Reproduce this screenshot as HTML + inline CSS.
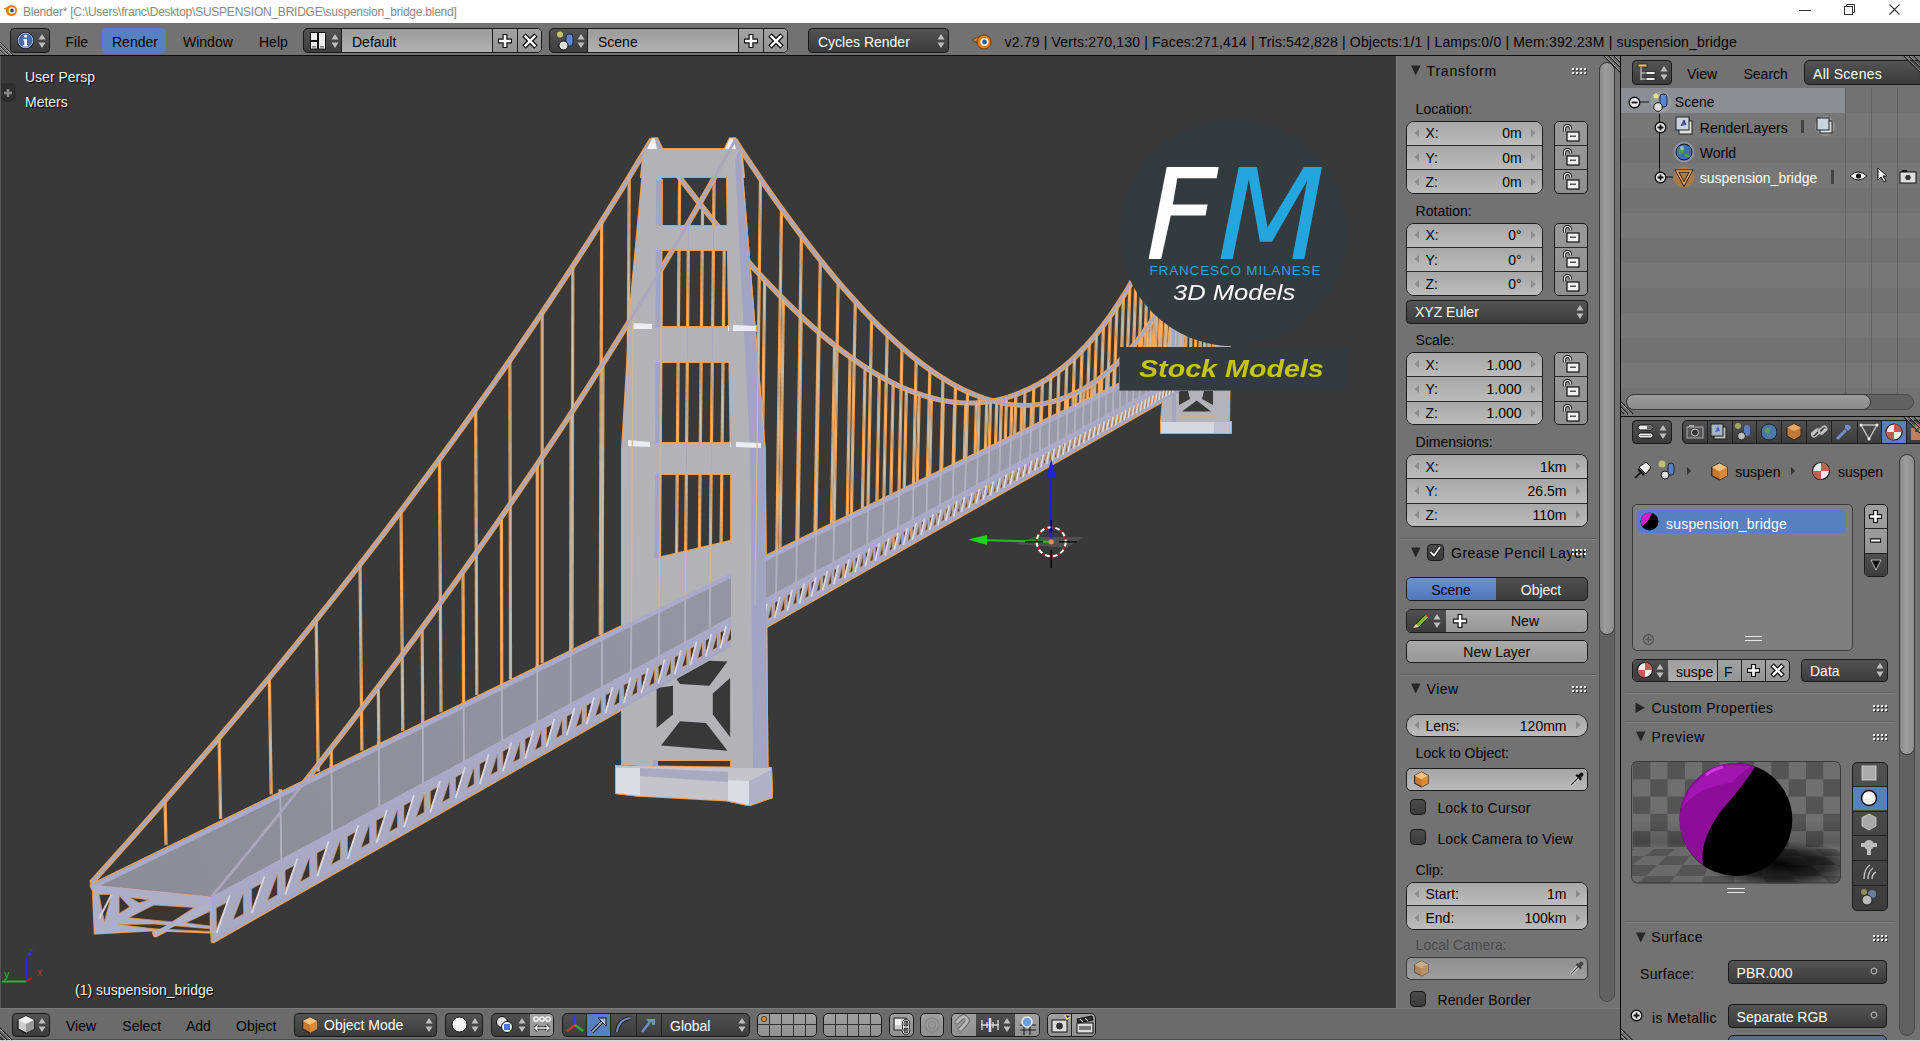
<!DOCTYPE html><html><head><meta charset="utf-8"><title>Blender</title><style>
*{margin:0;padding:0;box-sizing:border-box}
html,body{width:1920px;height:1041px;overflow:hidden;background:#727272}
body{position:relative;font-family:"Liberation Sans",sans-serif}
.t{position:absolute;white-space:nowrap}
.b{position:absolute}
svg{position:absolute;overflow:visible}
.menu{background:linear-gradient(#535353,#3b3b3b);border:1px solid #1a1a1a;border-radius:4px}
.num{background:linear-gradient(#a5a5a5,#bababa);border:1px solid #1e1e1e;border-radius:8px}
.btn{background:linear-gradient(#a4a4a4,#929292);border:1px solid #1e1e1e;border-radius:4px}
.tfld{background:linear-gradient(#9d9d9d,#afafaf)}
.chk{background:linear-gradient(#505050,#3e3e3e);border:1px solid #1a1a1a;border-radius:4px}
.sel{background:#5680c2}
</style></head><body>
<div class="b " style="left:0.0px;top:56.0px;width:1396.0px;height:952.0px;background:#393939;"></div>
<svg width="1396" height="952" viewBox="0 56 1396 952" style="left:0;top:56px"><defs><clipPath id="twc"><polygon points="645,149 661,149 660,300 656,470 655,766 622,764 622,450 631,300"/><polygon points="727,149 740,149 764.7,450 767.5,768 731,768 731,474 727,177"/><polygon points="644,149 741,149 744,177 641,177"/><polygon points="650,226 745,226 748,250 647,250"/><polygon points="633,327 754,327 756,362 631,362"/><polygon points="629,443 760,443 762,474 627,474"/></clipPath><linearGradient id="dkg" gradientUnits="userSpaceOnUse" x1="150" y1="890" x2="1150" y2="390"><stop offset="0" stop-color="#8d8d99"/><stop offset="0.5" stop-color="#9393a2"/><stop offset="1" stop-color="#9c9cac"/></linearGradient><filter id="ol" x="-2%" y="-2%" width="104%" height="104%"><feMorphology in="SourceAlpha" operator="dilate" radius="1" result="d"/><feFlood flood-color="#e9a257"/><feComposite in2="d" operator="in" result="o"/><feMerge><feMergeNode in="o"/><feMergeNode in="SourceGraphic"/></feMerge></filter></defs><g filter="url(#ol)"><polyline points="91.5,882.7 113.5,858.3 135.0,834.3 155.8,810.7 176.1,787.5 195.8,764.7 215.0,742.3 233.7,720.2 251.9,698.5 269.7,677.1 287.0,656.0 303.9,635.2 320.3,614.7 336.4,594.5 352.1,574.5 367.4,554.8 382.4,535.4 397.0,516.2 411.3,497.2 425.3,478.4 438.9,459.9 452.3,441.5 465.4,423.4 478.2,405.4 490.7,387.7 503.0,370.1 515.0,352.7 526.8,335.4 538.4,318.3 549.7,301.4 560.8,284.6 571.7,268.0 582.3,251.5 592.8,235.2 603.1,218.9 613.2,202.8 623.1,186.9 632.8,171.0 642.3,155.3 651.7,139.7" fill="none" stroke="#aca6bc" stroke-width="2.8" /><polyline points="651.7,139.7 662.1,154.1 672.3,167.8 682.3,181.1 692.0,193.7 701.5,205.9 710.7,217.5 719.8,228.6 728.7,239.3 737.4,249.5 745.9,259.2 754.2,268.5 762.4,277.4 770.4,285.9 778.2,294.0 785.9,301.7 793.4,309.0 800.8,316.0 808.0,322.7 815.1,329.0 822.1,335.0 828.9,340.7 835.6,346.0 842.2,351.1 848.7,355.9 855.0,360.4 861.3,364.7 867.4,368.7 873.4,372.4 879.4,375.9 885.2,379.1 890.9,382.1 896.6,384.9 902.1,387.4 907.6,389.8 913.0,391.9 918.3,393.8 923.5,395.6 928.6,397.1 933.7,398.4 938.6,399.6 943.5,400.6 948.4,401.4 953.1,402.0 957.8,402.5 962.4,402.8 967.0,403.0 971.5,403.0 975.9,402.8 980.3,402.5 984.6,402.1 988.9,401.5 993.1,400.8 997.2,400.0 1001.3,399.0 1005.3,398.0 1009.3,396.8 1013.2,395.5 1017.1,394.1 1021.0,392.5 1024.7,390.9 1028.5,389.3 1032.2,387.5 1035.8,385.6 1039.4,383.6 1043.0,381.5 1046.5,379.4 1050.0,377.1 1053.4,374.7 1056.8,372.3 1060.2,369.7 1063.5,367.1 1066.8,364.3 1070.1,361.5 1073.3,358.6 1076.5,355.6 1079.6,352.5 1082.7,349.3 1085.8,346.1 1088.9,342.7 1091.9,339.3 1094.9,335.8 1097.8,332.2 1100.8,328.5 1103.7,324.7 1106.5,320.9 1109.4,317.0 1112.2,313.0 1115.0,308.9 1117.8,304.8 1120.5,300.6 1123.2,296.3 1125.9,291.9 1128.6,287.5 1131.2,283.0 1133.8,278.4 1136.4,273.8 1139.0,269.1 1141.6,264.3 1144.1,259.5 1146.6,254.6 1149.1,249.6 1151.5,244.5 1154.0,239.4 1156.4,234.3 1158.8,229.0 1161.2,223.7 1163.6,218.4 1165.9,213.0 1168.2,207.5 1170.6,202.0 1172.9,196.4 1175.1,190.7 1177.4,185.0 1179.6,179.3 1181.9,173.4 1184.1,167.6 1186.3,161.6 1188.4,155.6 1190.6,149.6" fill="none" stroke="#aca6bc" stroke-width="2.8" /><line x1="165.0" y1="800.3" x2="166.0" y2="844.3" stroke="#d6b894" stroke-width="1.2" /><line x1="219.1" y1="737.6" x2="220.6" y2="817.9" stroke="#d6b894" stroke-width="1.2" /><line x1="269.3" y1="677.5" x2="271.2" y2="793.5" stroke="#d6b894" stroke-width="1.2" /><line x1="316.2" y1="619.9" x2="318.2" y2="770.8" stroke="#d6b894" stroke-width="1.2" /><line x1="360.0" y1="564.5" x2="361.9" y2="749.7" stroke="#d6b894" stroke-width="1.2" /><line x1="401.0" y1="510.9" x2="402.8" y2="729.9" stroke="#d6b894" stroke-width="1.2" /><line x1="439.5" y1="459.1" x2="441.0" y2="711.5" stroke="#d6b894" stroke-width="1.2" /><line x1="475.7" y1="408.9" x2="476.8" y2="694.2" stroke="#d6b894" stroke-width="1.2" /><line x1="509.9" y1="360.1" x2="510.5" y2="677.9" stroke="#d6b894" stroke-width="1.2" /><line x1="542.2" y1="312.6" x2="542.2" y2="662.6" stroke="#d6b894" stroke-width="1.2" /><line x1="572.8" y1="266.3" x2="572.0" y2="648.2" stroke="#d6b894" stroke-width="1.2" /><line x1="601.7" y1="221.1" x2="600.2" y2="634.6" stroke="#d6b894" stroke-width="1.2" /><line x1="629.2" y1="176.8" x2="626.9" y2="621.7" stroke="#d6b894" stroke-width="1.2" /><line x1="679.6" y1="177.6" x2="676.2" y2="597.9" stroke="#d6b894" stroke-width="1.2" /><line x1="702.6" y1="207.3" x2="699.0" y2="586.9" stroke="#d6b894" stroke-width="1.2" /><line x1="724.4" y1="234.1" x2="720.7" y2="576.4" stroke="#d6b894" stroke-width="1.2" /><line x1="745.0" y1="258.2" x2="741.4" y2="566.5" stroke="#d6b894" stroke-width="1.2" /><line x1="764.7" y1="279.9" x2="761.1" y2="556.9" stroke="#d6b894" stroke-width="1.2" /><line x1="783.4" y1="299.2" x2="779.9" y2="547.9" stroke="#d6b894" stroke-width="1.2" /><line x1="801.2" y1="316.5" x2="797.9" y2="539.2" stroke="#d6b894" stroke-width="1.2" /><line x1="818.3" y1="331.8" x2="815.0" y2="530.9" stroke="#d6b894" stroke-width="1.2" /><line x1="834.6" y1="345.2" x2="831.5" y2="522.9" stroke="#d6b894" stroke-width="1.2" /><line x1="850.1" y1="357.0" x2="847.3" y2="515.3" stroke="#d6b894" stroke-width="1.2" /><line x1="865.1" y1="367.2" x2="862.4" y2="508.0" stroke="#d6b894" stroke-width="1.2" /><line x1="879.4" y1="375.9" x2="876.9" y2="501.0" stroke="#d6b894" stroke-width="1.2" /><line x1="893.2" y1="383.2" x2="890.9" y2="494.3" stroke="#d6b894" stroke-width="1.2" /><line x1="906.4" y1="389.3" x2="904.3" y2="487.8" stroke="#d6b894" stroke-width="1.2" /><line x1="919.2" y1="394.1" x2="917.2" y2="481.6" stroke="#d6b894" stroke-width="1.2" /><line x1="931.4" y1="397.9" x2="929.7" y2="475.6" stroke="#d6b894" stroke-width="1.2" /><line x1="943.3" y1="400.5" x2="941.7" y2="469.8" stroke="#d6b894" stroke-width="1.2" /><line x1="954.7" y1="402.2" x2="953.2" y2="464.2" stroke="#d6b894" stroke-width="1.2" /><line x1="965.8" y1="402.9" x2="964.4" y2="458.8" stroke="#d6b894" stroke-width="1.2" /><line x1="976.4" y1="402.8" x2="975.1" y2="453.6" stroke="#d6b894" stroke-width="1.2" /><line x1="986.8" y1="401.8" x2="985.5" y2="448.6" stroke="#d6b894" stroke-width="1.2" /><line x1="996.8" y1="400.1" x2="995.6" y2="443.7" stroke="#d6b894" stroke-width="1.2" /><line x1="1006.5" y1="397.6" x2="1005.3" y2="439.0" stroke="#d6b894" stroke-width="1.2" /><line x1="1015.9" y1="394.5" x2="1014.7" y2="434.5" stroke="#d6b894" stroke-width="1.2" /><line x1="1025.0" y1="390.8" x2="1023.9" y2="430.1" stroke="#d6b894" stroke-width="1.2" /><line x1="1033.8" y1="386.6" x2="1032.7" y2="425.8" stroke="#d6b894" stroke-width="1.2" /><line x1="1042.4" y1="381.9" x2="1041.3" y2="421.7" stroke="#d6b894" stroke-width="1.2" /><line x1="1050.8" y1="376.6" x2="1049.6" y2="417.7" stroke="#d6b894" stroke-width="1.2" /><line x1="1058.9" y1="370.7" x2="1057.6" y2="413.8" stroke="#d6b894" stroke-width="1.2" /><line x1="1066.8" y1="364.3" x2="1065.4" y2="410.0" stroke="#d6b894" stroke-width="1.2" /><line x1="1074.5" y1="357.4" x2="1073.0" y2="406.4" stroke="#d6b894" stroke-width="1.2" /><line x1="1082.1" y1="350.0" x2="1080.4" y2="402.8" stroke="#d6b894" stroke-width="1.2" /><line x1="1089.4" y1="342.1" x2="1087.6" y2="399.3" stroke="#d6b894" stroke-width="1.2" /><line x1="1096.5" y1="333.8" x2="1094.5" y2="396.0" stroke="#d6b894" stroke-width="1.2" /><line x1="1103.5" y1="324.9" x2="1101.3" y2="392.7" stroke="#d6b894" stroke-width="1.2" /><line x1="1110.3" y1="315.7" x2="1107.9" y2="389.5" stroke="#d6b894" stroke-width="1.2" /><line x1="1117.0" y1="306.0" x2="1114.3" y2="386.4" stroke="#d6b894" stroke-width="1.2" /><line x1="1123.5" y1="295.8" x2="1120.6" y2="383.4" stroke="#d6b894" stroke-width="1.2" /><line x1="1129.9" y1="285.3" x2="1126.6" y2="380.5" stroke="#d6b894" stroke-width="1.2" /><line x1="1136.1" y1="274.3" x2="1132.6" y2="377.6" stroke="#d6b894" stroke-width="1.2" /><line x1="1142.3" y1="263.0" x2="1138.4" y2="374.8" stroke="#d6b894" stroke-width="1.2" /><line x1="1148.2" y1="251.2" x2="1144.0" y2="372.1" stroke="#d6b894" stroke-width="1.2" /><line x1="1154.1" y1="239.2" x2="1149.5" y2="369.4" stroke="#d6b894" stroke-width="1.2" /><line x1="1159.9" y1="226.7" x2="1154.9" y2="366.8" stroke="#d6b894" stroke-width="1.2" /><line x1="1165.5" y1="213.9" x2="1160.1" y2="364.3" stroke="#d6b894" stroke-width="1.2" /><line x1="1171.1" y1="200.7" x2="1165.2" y2="361.8" stroke="#d6b894" stroke-width="1.2" /><line x1="1176.5" y1="187.3" x2="1170.2" y2="359.4" stroke="#d6b894" stroke-width="1.2" /><line x1="1181.8" y1="173.5" x2="1175.1" y2="357.1" stroke="#d6b894" stroke-width="1.2" /><line x1="1187.1" y1="159.3" x2="1179.8" y2="354.8" stroke="#d6b894" stroke-width="1.2" /><polygon points="1186.0,150.0 1197.0,150.0 1178.0,422.0 1161.0,422.0" fill="#b3b3b9" /><polygon points="1224.0,150.0 1233.0,150.0 1229.0,422.0 1213.0,422.0" fill="#b3b3b9" /><polygon points="1172.0,300.0 1178.0,300.0 1178.0,422.0 1172.0,422.0" fill="#a6a6c4" /><polygon points="1176.0,388.0 1216.0,388.0 1216.0,422.0 1176.0,422.0" fill="#b3b3b9" /><polygon points="1179.0,391.0 1188.0,391.0 1190.0,399.0 1179.0,405.0" fill="#393939" /><polygon points="1204.0,391.0 1213.0,391.0 1213.0,405.0 1202.0,399.0" fill="#393939" /><polygon points="1182.0,411.5 1211.0,411.5 1196.7,400.5" fill="#393939" /><polygon points="1180.0,415.0 1213.0,415.0 1213.0,418.0 1180.0,418.0" fill="#c8b090" /><polygon points="1161.0,422.0 1231.0,422.0 1231.0,433.0 1161.0,433.0" fill="#d6d6de" /><polygon points="1214.0,422.0 1231.0,422.0 1231.0,433.0 1214.0,433.0" fill="#c0c0d4" /><polygon points="645.0,149.0 661.0,149.0 660.0,300.0 656.0,470.0 655.0,766.0 622.0,764.0 622.0,450.0 631.0,300.0" fill="#b3b3b7" /><polygon points="656.0,180.0 662.0,180.0 660.0,470.0 657.0,766.0 653.0,766.0 655.0,470.0" fill="#a3a3c3" /><polygon points="644.0,149.0 741.0,149.0 744.0,177.0 641.0,177.0" fill="#b3b3b7" /><polygon points="650.0,226.0 745.0,226.0 748.0,250.0 647.0,250.0" fill="#b3b3b7" /><polygon points="633.0,327.0 754.0,327.0 756.0,362.0 631.0,362.0" fill="#b3b3b7" /><polygon points="629.0,443.0 760.0,443.0 762.0,474.0 627.0,474.0" fill="#b3b3b7" /><polygon points="647.0,149.0 652.0,138.5 657.0,138.5 660.0,149.0" fill="#f2f2f6" /><polygon points="655.0,138.5 657.0,138.5 662.0,149.0 657.0,149.0" fill="#a6a6c4" /><polygon points="725.0,149.0 730.0,138.5 735.0,138.5 738.0,149.0" fill="#f2f2f6" /><polygon points="733.0,138.5 735.0,138.5 741.0,149.0 736.0,149.0" fill="#a6a6c4" /><polygon points="633.0,323.0 652.0,324.0 652.0,329.0 633.0,329.0" fill="#ececf4" /><polygon points="728.0,326.0 750.0,326.0 750.0,331.0 728.0,331.0" fill="#ececf4" /><polygon points="628.0,440.0 650.0,442.0 650.0,447.0 628.0,446.0" fill="#ececf4" /><polygon points="730.0,442.0 756.0,443.0 756.0,448.0 730.0,447.0" fill="#ececf4" /><polygon points="650.0,560.0 735.0,540.0 735.0,760.0 650.0,760.0" fill="#b3b3b7" /><polygon points="676.5,679.0 709.4,660.8 727.5,661.6 709.4,685.8 680.0,684.0" fill="#393939" /><polygon points="656.6,688.0 673.0,685.8 673.0,714.4 656.6,728.0" fill="#393939" /><polygon points="712.8,693.6 730.1,678.0 730.1,736.9 712.8,714.4" fill="#393939" /><polygon points="661.0,745.5 680.0,721.3 706.0,723.0 727.5,750.7" fill="#393939" /><polygon points="616.0,766.0 771.0,768.0 772.0,797.0 749.0,805.0 728.0,800.5 640.0,795.7 616.0,793.0" fill="#c4c4ca" /><polygon points="616.0,768.0 640.0,768.0 640.0,795.7 616.0,793.0" fill="#dcdce4" /><polygon points="728.0,780.0 749.0,781.0 749.0,805.0 728.0,800.5" fill="#dcdce4" /><polygon points="640.0,768.0 728.0,772.0 728.0,782.0 640.0,776.0" fill="#a9a9c0" /><polygon points="91.5,884.7 1189.1,351.5 1225.8,352.2 211.6,896.7" fill="url(#dkg)" /><polyline points="91.6,887.4 1189.0,352.3" fill="none" stroke="#a9a9c9" stroke-width="4.5" /><polygon points="211.6,896.7 1225.8,352.2 1225.3,364.7 212.5,942.4" fill="#a9a9c4" /><polygon points="216.2,908.1 227.0,902.2 216.6,929.0" fill="#3c3631" stroke="#d89858" stroke-width="0.6"/><polygon points="233.1,919.7 243.6,913.8 243.2,893.3" fill="#3c3631" stroke="#d89858" stroke-width="0.6"/><line x1="216.7" y1="933.1" x2="229.8" y2="895.2" stroke="#dcdce6" stroke-width="1.6" /><polygon points="251.5,888.8 261.8,883.2 251.9,909.2" fill="#3c3631" stroke="#d89858" stroke-width="0.6"/><polygon points="267.5,900.4 277.5,894.8 277.2,874.7" fill="#3c3631" stroke="#d89858" stroke-width="0.6"/><line x1="251.9" y1="913.1" x2="264.4" y2="876.4" stroke="#dcdce6" stroke-width="1.6" /><polygon points="285.1,870.4 294.8,865.1 285.4,890.3" fill="#3c3631" stroke="#d89858" stroke-width="0.6"/><polygon points="300.2,882.0 309.7,876.6 309.4,857.1" fill="#3c3631" stroke="#d89858" stroke-width="0.6"/><line x1="285.4" y1="894.2" x2="297.3" y2="858.5" stroke="#dcdce6" stroke-width="1.6" /><polygon points="316.9,853.0 326.2,847.9 317.2,872.4" fill="#3c3631" stroke="#d89858" stroke-width="0.6"/><polygon points="331.3,864.5 340.4,859.4 340.2,840.3" fill="#3c3631" stroke="#d89858" stroke-width="0.6"/><line x1="317.3" y1="876.2" x2="328.6" y2="841.5" stroke="#dcdce6" stroke-width="1.6" /><polygon points="347.3,836.4 356.1,831.5 347.5,855.4" fill="#3c3631" stroke="#d89858" stroke-width="0.6"/><polygon points="361.0,847.8 369.6,842.9 369.4,824.3" fill="#3c3631" stroke="#d89858" stroke-width="0.6"/><line x1="347.6" y1="859.1" x2="358.4" y2="825.3" stroke="#dcdce6" stroke-width="1.6" /><polygon points="376.3,820.5 384.7,815.9 376.4,839.1" fill="#3c3631" stroke="#d89858" stroke-width="0.6"/><polygon points="389.3,831.9 397.5,827.3 397.4,809.0" fill="#3c3631" stroke="#d89858" stroke-width="0.6"/><line x1="376.5" y1="842.7" x2="386.9" y2="809.9" stroke="#dcdce6" stroke-width="1.6" /><polygon points="403.9,805.4 411.9,801.0 404.0,823.6" fill="#3c3631" stroke="#d89858" stroke-width="0.6"/><polygon points="416.3,816.7 424.2,812.3 424.1,794.4" fill="#3c3631" stroke="#d89858" stroke-width="0.6"/><line x1="404.1" y1="827.1" x2="414.0" y2="795.1" stroke="#dcdce6" stroke-width="1.6" /><polygon points="430.3,791.0 438.0,786.8 430.4,808.8" fill="#3c3631" stroke="#d89858" stroke-width="0.6"/><polygon points="442.2,802.2 449.7,797.9 449.6,780.4" fill="#3c3631" stroke="#d89858" stroke-width="0.6"/><line x1="430.4" y1="812.2" x2="440.0" y2="781.0" stroke="#dcdce6" stroke-width="1.6" /><polygon points="455.6,777.2 462.9,773.1 455.6,794.6" fill="#3c3631" stroke="#d89858" stroke-width="0.6"/><polygon points="466.9,788.3 474.1,784.2 474.0,767.1" fill="#3c3631" stroke="#d89858" stroke-width="0.6"/><line x1="455.7" y1="798.0" x2="464.8" y2="767.6" stroke="#dcdce6" stroke-width="1.6" /><polygon points="479.7,763.9 486.8,760.1 479.8,781.0" fill="#3c3631" stroke="#d89858" stroke-width="0.6"/><polygon points="490.6,774.9 497.5,771.1 497.4,754.3" fill="#3c3631" stroke="#d89858" stroke-width="0.6"/><line x1="479.8" y1="784.3" x2="488.6" y2="754.6" stroke="#dcdce6" stroke-width="1.6" /><polygon points="502.9,751.3 509.7,747.6 502.9,768.0" fill="#3c3631" stroke="#d89858" stroke-width="0.6"/><polygon points="513.3,762.2 519.9,758.5 519.9,742.0" fill="#3c3631" stroke="#d89858" stroke-width="0.6"/><line x1="502.9" y1="771.2" x2="511.4" y2="742.3" stroke="#dcdce6" stroke-width="1.6" /><polygon points="525.1,739.1 531.6,735.6 525.1,755.5" fill="#3c3631" stroke="#d89858" stroke-width="0.6"/><polygon points="535.0,749.9 541.4,746.4 541.4,730.2" fill="#3c3631" stroke="#d89858" stroke-width="0.6"/><line x1="525.1" y1="758.7" x2="533.3" y2="730.4" stroke="#dcdce6" stroke-width="1.6" /><polygon points="546.5,727.5 552.7,724.0 546.4,743.5" fill="#3c3631" stroke="#d89858" stroke-width="0.6"/><polygon points="556.0,738.2 562.1,734.7 562.1,718.9" fill="#3c3631" stroke="#d89858" stroke-width="0.6"/><line x1="546.4" y1="746.7" x2="554.3" y2="719.0" stroke="#dcdce6" stroke-width="1.6" /><polygon points="566.9,716.2 572.9,713.0 566.9,732.0" fill="#3c3631" stroke="#d89858" stroke-width="0.6"/><polygon points="576.1,726.9 581.9,723.6 582.0,708.0" fill="#3c3631" stroke="#d89858" stroke-width="0.6"/><line x1="566.9" y1="735.1" x2="574.5" y2="708.0" stroke="#dcdce6" stroke-width="1.6" /><polygon points="586.6,705.5 592.4,702.3 586.6,720.9" fill="#3c3631" stroke="#d89858" stroke-width="0.6"/><polygon points="595.4,716.0 601.1,712.8 601.1,697.6" fill="#3c3631" stroke="#d89858" stroke-width="0.6"/><line x1="586.6" y1="724.0" x2="593.9" y2="697.5" stroke="#dcdce6" stroke-width="1.6" /><polygon points="605.6,695.1 611.2,692.1 605.5,710.3" fill="#3c3631" stroke="#d89858" stroke-width="0.6"/><polygon points="614.0,705.5 619.5,702.5 619.5,687.5" fill="#3c3631" stroke="#d89858" stroke-width="0.6"/><line x1="605.5" y1="713.3" x2="612.6" y2="687.3" stroke="#dcdce6" stroke-width="1.6" /><polygon points="623.9,685.1 629.2,682.2 623.8,700.0" fill="#3c3631" stroke="#d89858" stroke-width="0.6"/><polygon points="631.9,695.4 637.2,692.5 637.3,677.8" fill="#3c3631" stroke="#d89858" stroke-width="0.6"/><line x1="623.8" y1="702.9" x2="630.6" y2="677.6" stroke="#dcdce6" stroke-width="1.6" /><polygon points="641.4,675.5 646.6,672.7 641.4,690.2" fill="#3c3631" stroke="#d89858" stroke-width="0.6"/><polygon points="649.2,685.7 654.3,682.9 654.4,668.4" fill="#3c3631" stroke="#d89858" stroke-width="0.6"/><line x1="641.3" y1="693.0" x2="648.0" y2="668.1" stroke="#dcdce6" stroke-width="1.6" /><polygon points="658.4,666.2 663.4,663.5 658.3,680.6" fill="#3c3631" stroke="#d89858" stroke-width="0.6"/><polygon points="665.9,676.4 670.8,673.6 670.9,659.4" fill="#3c3631" stroke="#d89858" stroke-width="0.6"/><line x1="658.3" y1="683.4" x2="664.7" y2="659.1" stroke="#dcdce6" stroke-width="1.6" /><polygon points="674.8,657.3 679.6,654.7 674.7,671.4" fill="#3c3631" stroke="#d89858" stroke-width="0.6"/><polygon points="682.0,667.3 686.7,664.7 686.8,650.7" fill="#3c3631" stroke="#d89858" stroke-width="0.6"/><line x1="674.6" y1="674.2" x2="680.9" y2="650.3" stroke="#dcdce6" stroke-width="1.6" /><polygon points="690.6,648.6 695.2,646.1 690.4,662.5" fill="#3c3631" stroke="#d89858" stroke-width="0.6"/><polygon points="697.5,658.6 702.1,656.0 702.2,642.3" fill="#3c3631" stroke="#d89858" stroke-width="0.6"/><line x1="690.4" y1="665.3" x2="696.5" y2="641.8" stroke="#dcdce6" stroke-width="1.6" /><polygon points="705.8,640.3 710.3,637.8 705.7,654.0" fill="#3c3631" stroke="#d89858" stroke-width="0.6"/><polygon points="712.5,650.1 716.9,647.6 717.1,634.1" fill="#3c3631" stroke="#d89858" stroke-width="0.6"/><line x1="705.7" y1="656.6" x2="711.5" y2="633.6" stroke="#dcdce6" stroke-width="1.6" /><polygon points="720.6,632.2 724.9,629.9 720.4,645.7" fill="#3c3631" stroke="#d89858" stroke-width="0.6"/><polygon points="727.1,642.0 731.3,639.6 731.5,626.3" fill="#3c3631" stroke="#d89858" stroke-width="0.6"/><line x1="720.4" y1="648.3" x2="726.1" y2="625.7" stroke="#dcdce6" stroke-width="1.6" /><polygon points="734.9,624.4 739.0,622.1 734.7,637.7" fill="#3c3631" stroke="#d89858" stroke-width="0.6"/><polygon points="741.1,634.1 745.2,631.7 745.4,618.7" fill="#3c3631" stroke="#d89858" stroke-width="0.6"/><line x1="734.7" y1="640.3" x2="740.2" y2="618.1" stroke="#dcdce6" stroke-width="1.6" /><polygon points="748.7,616.9 752.7,614.6 748.5,629.9" fill="#3c3631" stroke="#d89858" stroke-width="0.6"/><polygon points="754.7,626.4 758.7,624.2 758.9,611.3" fill="#3c3631" stroke="#d89858" stroke-width="0.6"/><line x1="748.5" y1="632.5" x2="753.8" y2="610.7" stroke="#dcdce6" stroke-width="1.6" /><polygon points="762.0,609.6 766.0,607.4 761.9,622.4" fill="#3c3631" stroke="#d89858" stroke-width="0.6"/><polygon points="767.9,619.0 771.7,616.8 771.9,604.2" fill="#3c3631" stroke="#d89858" stroke-width="0.6"/><line x1="761.8" y1="624.9" x2="767.0" y2="603.5" stroke="#dcdce6" stroke-width="1.6" /><polygon points="775.0,602.5 778.8,600.4 774.8,615.1" fill="#3c3631" stroke="#d89858" stroke-width="0.6"/><polygon points="780.6,611.8 784.4,609.7 784.6,597.2" fill="#3c3631" stroke="#d89858" stroke-width="0.6"/><line x1="774.8" y1="617.6" x2="779.8" y2="596.6" stroke="#dcdce6" stroke-width="1.6" /><polygon points="787.5,595.6 791.2,593.6 787.3,608.1" fill="#3c3631" stroke="#d89858" stroke-width="0.6"/><polygon points="793.0,604.9 796.6,602.8 796.8,590.5" fill="#3c3631" stroke="#d89858" stroke-width="0.6"/><line x1="787.3" y1="610.5" x2="792.2" y2="589.8" stroke="#dcdce6" stroke-width="1.6" /><polygon points="799.7,589.0 803.3,587.0 799.5,601.2" fill="#3c3631" stroke="#d89858" stroke-width="0.6"/><polygon points="805.0,598.1 808.5,596.2 808.7,584.0" fill="#3c3631" stroke="#d89858" stroke-width="0.6"/><line x1="799.5" y1="603.6" x2="804.3" y2="583.3" stroke="#dcdce6" stroke-width="1.6" /><polygon points="811.5,582.5 815.0,580.6 811.3,594.6" fill="#3c3631" stroke="#d89858" stroke-width="0.6"/><polygon points="816.6,591.6 820.0,589.7 820.2,577.7" fill="#3c3631" stroke="#d89858" stroke-width="0.6"/><line x1="811.3" y1="596.9" x2="815.9" y2="577.0" stroke="#dcdce6" stroke-width="1.6" /><polygon points="823.0,576.2 826.3,574.4 822.8,588.1" fill="#3c3631" stroke="#d89858" stroke-width="0.6"/><polygon points="827.9,585.2 831.2,583.4 831.4,571.6" fill="#3c3631" stroke="#d89858" stroke-width="0.6"/><line x1="822.7" y1="590.5" x2="827.3" y2="570.8" stroke="#dcdce6" stroke-width="1.6" /><polygon points="834.1,570.1 837.4,568.4 833.9,581.9" fill="#3c3631" stroke="#d89858" stroke-width="0.6"/><polygon points="838.9,579.1 842.1,577.3 842.3,565.6" fill="#3c3631" stroke="#d89858" stroke-width="0.6"/><line x1="833.8" y1="584.2" x2="838.3" y2="564.8" stroke="#dcdce6" stroke-width="1.6" /><polygon points="844.9,564.2 848.1,562.5 844.7,575.8" fill="#3c3631" stroke="#d89858" stroke-width="0.6"/><polygon points="849.6,573.1 852.7,571.3 852.9,559.9" fill="#3c3631" stroke="#d89858" stroke-width="0.6"/><line x1="844.6" y1="578.1" x2="849.0" y2="559.0" stroke="#dcdce6" stroke-width="1.6" /><polygon points="855.4,558.5 858.5,556.8 855.2,569.9" fill="#3c3631" stroke="#d89858" stroke-width="0.6"/><polygon points="859.9,567.3 863.0,565.5 863.2,554.2" fill="#3c3631" stroke="#d89858" stroke-width="0.6"/><line x1="855.1" y1="572.1" x2="859.4" y2="553.4" stroke="#dcdce6" stroke-width="1.6" /><polygon points="865.6,552.9 868.6,551.3 865.4,564.2" fill="#3c3631" stroke="#d89858" stroke-width="0.6"/><polygon points="870.0,561.6 873.0,559.9 873.2,548.8" fill="#3c3631" stroke="#d89858" stroke-width="0.6"/><line x1="865.3" y1="566.4" x2="869.5" y2="547.9" stroke="#dcdce6" stroke-width="1.6" /><polygon points="875.5,547.5 878.5,545.9 875.3,558.6" fill="#3c3631" stroke="#d89858" stroke-width="0.6"/><polygon points="879.8,556.1 882.7,554.5 882.9,543.4" fill="#3c3631" stroke="#d89858" stroke-width="0.6"/><line x1="875.3" y1="560.8" x2="879.3" y2="542.6" stroke="#dcdce6" stroke-width="1.6" /><polygon points="885.2,542.2 888.0,540.6 885.0,553.2" fill="#3c3631" stroke="#d89858" stroke-width="0.6"/><polygon points="889.3,550.7 892.1,549.1 892.4,538.3" fill="#3c3631" stroke="#d89858" stroke-width="0.6"/><line x1="884.9" y1="555.3" x2="888.9" y2="537.4" stroke="#dcdce6" stroke-width="1.6" /><polygon points="894.6,537.0 897.4,535.5 894.4,547.9" fill="#3c3631" stroke="#d89858" stroke-width="0.6"/><polygon points="898.6,545.5 901.4,544.0 901.6,533.2" fill="#3c3631" stroke="#d89858" stroke-width="0.6"/><line x1="894.3" y1="550.0" x2="898.2" y2="532.3" stroke="#dcdce6" stroke-width="1.6" /><polygon points="903.8,532.0 906.5,530.6 903.5,542.7" fill="#3c3631" stroke="#d89858" stroke-width="0.6"/><polygon points="907.7,540.4 910.3,538.9 910.6,528.3" fill="#3c3631" stroke="#d89858" stroke-width="0.6"/><line x1="903.5" y1="544.8" x2="907.2" y2="527.4" stroke="#dcdce6" stroke-width="1.6" /><polygon points="912.7,527.2 915.3,525.7 912.4,537.7" fill="#3c3631" stroke="#d89858" stroke-width="0.6"/><polygon points="916.5,535.5 919.1,534.0 919.3,523.5" fill="#3c3631" stroke="#d89858" stroke-width="0.6"/><line x1="912.4" y1="539.8" x2="916.1" y2="522.6" stroke="#dcdce6" stroke-width="1.6" /><polygon points="921.4,522.4 923.9,521.0 921.1,532.8" fill="#3c3631" stroke="#d89858" stroke-width="0.6"/><polygon points="925.1,530.6 927.6,529.2 927.8,518.9" fill="#3c3631" stroke="#d89858" stroke-width="0.6"/><line x1="921.1" y1="534.9" x2="924.7" y2="517.9" stroke="#dcdce6" stroke-width="1.6" /><polygon points="929.8,517.8 932.3,516.4 929.6,528.1" fill="#3c3631" stroke="#d89858" stroke-width="0.6"/><polygon points="933.4,525.9 935.9,524.5 936.1,514.3" fill="#3c3631" stroke="#d89858" stroke-width="0.6"/><line x1="929.6" y1="530.1" x2="933.1" y2="513.4" stroke="#dcdce6" stroke-width="1.6" /><polygon points="938.1,513.3 940.5,511.9 937.9,523.4" fill="#3c3631" stroke="#d89858" stroke-width="0.6"/><polygon points="941.6,521.3 944.0,520.0 944.2,509.9" fill="#3c3631" stroke="#d89858" stroke-width="0.6"/><line x1="937.8" y1="525.4" x2="941.2" y2="508.9" stroke="#dcdce6" stroke-width="1.6" /><polygon points="946.1,508.9 948.5,507.6 945.9,518.9" fill="#3c3631" stroke="#d89858" stroke-width="0.6"/><polygon points="949.5,516.9 951.9,515.5 952.1,505.6" fill="#3c3631" stroke="#d89858" stroke-width="0.6"/><line x1="945.9" y1="520.9" x2="949.2" y2="504.6" stroke="#dcdce6" stroke-width="1.6" /><polygon points="954.0,504.6 956.3,503.3 953.8,514.5" fill="#3c3631" stroke="#d89858" stroke-width="0.6"/><polygon points="957.3,512.5 959.6,511.2 959.8,501.4" fill="#3c3631" stroke="#d89858" stroke-width="0.6"/><line x1="953.7" y1="516.4" x2="957.0" y2="500.4" stroke="#dcdce6" stroke-width="1.6" /><polygon points="961.7,500.4 963.9,499.1 961.4,510.2" fill="#3c3631" stroke="#d89858" stroke-width="0.6"/><polygon points="964.9,508.2 967.1,507.0 967.4,497.3" fill="#3c3631" stroke="#d89858" stroke-width="0.6"/><line x1="961.4" y1="512.1" x2="964.6" y2="496.3" stroke="#dcdce6" stroke-width="1.6" /><polygon points="969.2,496.3 971.4,495.1 968.9,506.0" fill="#3c3631" stroke="#d89858" stroke-width="0.6"/><polygon points="972.3,504.1 974.5,502.8 974.7,493.2" fill="#3c3631" stroke="#d89858" stroke-width="0.6"/><line x1="968.9" y1="507.9" x2="972.0" y2="492.2" stroke="#dcdce6" stroke-width="1.6" /><polygon points="976.5,492.3 978.6,491.1 976.2,501.9" fill="#3c3631" stroke="#d89858" stroke-width="0.6"/><polygon points="979.5,500.0 981.7,498.8 981.9,489.3" fill="#3c3631" stroke="#d89858" stroke-width="0.6"/><line x1="976.2" y1="503.7" x2="979.3" y2="488.3" stroke="#dcdce6" stroke-width="1.6" /><polygon points="983.6,488.4 985.7,487.2 983.3,497.8" fill="#3c3631" stroke="#d89858" stroke-width="0.6"/><polygon points="986.6,496.0 988.7,494.9 988.9,485.5" fill="#3c3631" stroke="#d89858" stroke-width="0.6"/><line x1="983.3" y1="499.7" x2="986.3" y2="484.5" stroke="#dcdce6" stroke-width="1.6" /><polygon points="990.6,484.6 992.6,483.4 990.3,493.9" fill="#3c3631" stroke="#d89858" stroke-width="0.6"/><polygon points="993.5,492.2 995.5,491.0 995.8,481.7" fill="#3c3631" stroke="#d89858" stroke-width="0.6"/><line x1="990.3" y1="495.8" x2="993.2" y2="480.7" stroke="#dcdce6" stroke-width="1.6" /><polygon points="997.4,480.8 999.4,479.7 997.1,490.1" fill="#3c3631" stroke="#d89858" stroke-width="0.6"/><polygon points="1000.2,488.4 1002.2,487.2 1002.5,478.1" fill="#3c3631" stroke="#d89858" stroke-width="0.6"/><line x1="997.1" y1="491.9" x2="1000.0" y2="477.0" stroke="#dcdce6" stroke-width="1.6" /><polygon points="1004.0,477.2 1006.0,476.1 1003.8,486.4" fill="#3c3631" stroke="#d89858" stroke-width="0.6"/><polygon points="1006.8,484.7 1008.8,483.6 1009.0,474.5" fill="#3c3631" stroke="#d89858" stroke-width="0.6"/><line x1="1003.7" y1="488.1" x2="1006.6" y2="473.5" stroke="#dcdce6" stroke-width="1.6" /><polygon points="1010.6,473.6 1012.5,472.6 1010.3,482.7" fill="#3c3631" stroke="#d89858" stroke-width="0.6"/><polygon points="1013.3,481.0 1015.2,480.0 1015.4,471.0" fill="#3c3631" stroke="#d89858" stroke-width="0.6"/><line x1="1010.3" y1="484.5" x2="1013.1" y2="469.9" stroke="#dcdce6" stroke-width="1.6" /><polygon points="1016.9,470.1 1018.8,469.1 1016.7,479.1" fill="#3c3631" stroke="#d89858" stroke-width="0.6"/><polygon points="1019.6,477.5 1021.4,476.4 1021.7,467.6" fill="#3c3631" stroke="#d89858" stroke-width="0.6"/><line x1="1016.6" y1="480.9" x2="1019.4" y2="466.5" stroke="#dcdce6" stroke-width="1.6" /><polygon points="1023.2,466.7 1025.0,465.7 1022.9,475.6" fill="#3c3631" stroke="#d89858" stroke-width="0.6"/><polygon points="1025.7,474.0 1027.6,473.0 1027.8,464.2" fill="#3c3631" stroke="#d89858" stroke-width="0.6"/><line x1="1022.9" y1="477.3" x2="1025.6" y2="463.2" stroke="#dcdce6" stroke-width="1.6" /><polygon points="1029.3,463.4 1031.1,462.4 1029.0,472.2" fill="#3c3631" stroke="#d89858" stroke-width="0.6"/><polygon points="1031.8,470.6 1033.6,469.6 1033.8,460.9" fill="#3c3631" stroke="#d89858" stroke-width="0.6"/><line x1="1029.0" y1="473.9" x2="1031.6" y2="459.9" stroke="#dcdce6" stroke-width="1.6" /><polygon points="1035.2,460.1 1037.0,459.2 1035.0,468.8" fill="#3c3631" stroke="#d89858" stroke-width="0.6"/><polygon points="1037.7,467.3 1039.4,466.3 1039.7,457.7" fill="#3c3631" stroke="#d89858" stroke-width="0.6"/><line x1="1034.9" y1="470.5" x2="1037.5" y2="456.7" stroke="#dcdce6" stroke-width="1.6" /><polygon points="1041.1,456.9 1042.8,456.0 1040.8,465.5" fill="#3c3631" stroke="#d89858" stroke-width="0.6"/><polygon points="1043.5,464.0 1045.2,463.1 1045.4,454.6" fill="#3c3631" stroke="#d89858" stroke-width="0.6"/><line x1="1040.8" y1="467.2" x2="1043.3" y2="453.5" stroke="#dcdce6" stroke-width="1.6" /><polygon points="1046.8,453.8 1048.5,452.9 1046.5,462.3" fill="#3c3631" stroke="#d89858" stroke-width="0.6"/><polygon points="1049.1,460.9 1050.8,459.9 1051.1,451.5" fill="#3c3631" stroke="#d89858" stroke-width="0.6"/><line x1="1046.5" y1="464.0" x2="1049.0" y2="450.4" stroke="#dcdce6" stroke-width="1.6" /><polygon points="1052.4,450.8 1054.0,449.9 1052.1,459.2" fill="#3c3631" stroke="#d89858" stroke-width="0.6"/><polygon points="1054.7,457.7 1056.3,456.8 1056.6,448.5" fill="#3c3631" stroke="#d89858" stroke-width="0.6"/><line x1="1052.1" y1="460.8" x2="1054.5" y2="447.4" stroke="#dcdce6" stroke-width="1.6" /><polygon points="1057.9,447.8 1059.5,446.9 1057.6,456.1" fill="#3c3631" stroke="#d89858" stroke-width="0.6"/><polygon points="1060.1,454.7 1061.7,453.8 1062.0,445.5" fill="#3c3631" stroke="#d89858" stroke-width="0.6"/><line x1="1057.6" y1="457.7" x2="1060.0" y2="444.5" stroke="#dcdce6" stroke-width="1.6" /><polygon points="1063.2,444.8 1064.8,443.9 1063.0,453.1" fill="#3c3631" stroke="#d89858" stroke-width="0.6"/><polygon points="1065.4,451.7 1067.0,450.8 1067.3,442.6" fill="#3c3631" stroke="#d89858" stroke-width="0.6"/><line x1="1062.9" y1="454.7" x2="1065.3" y2="441.6" stroke="#dcdce6" stroke-width="1.6" /><polygon points="1068.5,441.9 1070.1,441.1 1068.3,450.1" fill="#3c3631" stroke="#d89858" stroke-width="0.6"/><polygon points="1070.7,448.8 1072.2,447.9 1072.5,439.8" fill="#3c3631" stroke="#d89858" stroke-width="0.6"/><line x1="1068.2" y1="451.7" x2="1070.6" y2="438.7" stroke="#dcdce6" stroke-width="1.6" /><polygon points="1073.7,439.1 1075.2,438.3 1073.4,447.2" fill="#3c3631" stroke="#d89858" stroke-width="0.6"/><polygon points="1075.8,445.9 1077.3,445.0 1077.5,437.0" fill="#3c3631" stroke="#d89858" stroke-width="0.6"/><line x1="1073.4" y1="448.8" x2="1075.7" y2="435.9" stroke="#dcdce6" stroke-width="1.6" /><polygon points="1078.7,436.3 1080.2,435.5 1078.5,444.3" fill="#3c3631" stroke="#d89858" stroke-width="0.6"/><polygon points="1080.8,443.1 1082.3,442.2 1082.5,434.3" fill="#3c3631" stroke="#d89858" stroke-width="0.6"/><line x1="1078.4" y1="445.9" x2="1080.7" y2="433.2" stroke="#dcdce6" stroke-width="1.6" /><polygon points="1083.7,433.6 1085.2,432.8 1083.5,441.6" fill="#3c3631" stroke="#d89858" stroke-width="0.6"/><polygon points="1085.7,440.3 1087.2,439.5 1087.4,431.6" fill="#3c3631" stroke="#d89858" stroke-width="0.6"/><line x1="1083.4" y1="443.1" x2="1085.6" y2="430.5" stroke="#dcdce6" stroke-width="1.6" /><polygon points="1088.6,431.0 1090.0,430.2 1088.3,438.8" fill="#3c3631" stroke="#d89858" stroke-width="0.6"/><polygon points="1090.5,437.6 1092.0,436.8 1092.2,429.0" fill="#3c3631" stroke="#d89858" stroke-width="0.6"/><line x1="1088.3" y1="440.4" x2="1090.5" y2="427.9" stroke="#dcdce6" stroke-width="1.6" /><polygon points="1093.4,428.4 1094.8,427.6 1093.1,436.1" fill="#3c3631" stroke="#d89858" stroke-width="0.6"/><polygon points="1095.3,434.9 1096.7,434.1 1096.9,426.4" fill="#3c3631" stroke="#d89858" stroke-width="0.6"/><line x1="1093.1" y1="437.7" x2="1095.2" y2="425.3" stroke="#dcdce6" stroke-width="1.6" /><polygon points="1098.0,425.8 1099.4,425.0 1097.8,433.5" fill="#3c3631" stroke="#d89858" stroke-width="0.6"/><polygon points="1099.9,432.3 1101.3,431.5 1101.5,423.9" fill="#3c3631" stroke="#d89858" stroke-width="0.6"/><line x1="1097.7" y1="435.0" x2="1099.9" y2="422.8" stroke="#dcdce6" stroke-width="1.6" /><polygon points="1102.6,423.3 1104.0,422.5 1102.4,430.9" fill="#3c3631" stroke="#d89858" stroke-width="0.6"/><polygon points="1104.5,429.7 1105.8,429.0 1106.1,421.4" fill="#3c3631" stroke="#d89858" stroke-width="0.6"/><line x1="1102.3" y1="432.4" x2="1104.4" y2="420.3" stroke="#dcdce6" stroke-width="1.6" /><polygon points="1107.1,420.8 1108.5,420.1 1106.9,428.4" fill="#3c3631" stroke="#d89858" stroke-width="0.6"/><polygon points="1108.9,427.2 1110.3,426.5 1110.5,419.0" fill="#3c3631" stroke="#d89858" stroke-width="0.6"/><line x1="1106.8" y1="429.9" x2="1108.9" y2="417.9" stroke="#dcdce6" stroke-width="1.6" /><polygon points="1111.6,418.4 1112.9,417.7 1111.3,425.9" fill="#3c3631" stroke="#d89858" stroke-width="0.6"/><polygon points="1113.3,424.8 1114.6,424.0 1114.9,416.6" fill="#3c3631" stroke="#d89858" stroke-width="0.6"/><line x1="1111.3" y1="427.4" x2="1113.3" y2="415.5" stroke="#dcdce6" stroke-width="1.6" /><polygon points="1115.9,416.0 1117.2,415.3 1115.7,423.4" fill="#3c3631" stroke="#d89858" stroke-width="0.6"/><polygon points="1117.7,422.3 1118.9,421.6 1119.2,414.2" fill="#3c3631" stroke="#d89858" stroke-width="0.6"/><line x1="1115.6" y1="424.9" x2="1117.6" y2="413.2" stroke="#dcdce6" stroke-width="1.6" /><polygon points="1120.2,413.7 1121.5,413.0 1119.9,421.0" fill="#3c3631" stroke="#d89858" stroke-width="0.6"/><polygon points="1121.9,419.9 1123.1,419.2 1123.4,411.9" fill="#3c3631" stroke="#d89858" stroke-width="0.6"/><line x1="1119.9" y1="422.5" x2="1121.9" y2="410.9" stroke="#dcdce6" stroke-width="1.6" /><polygon points="1124.4,411.4 1125.6,410.7 1124.1,418.7" fill="#3c3631" stroke="#d89858" stroke-width="0.6"/><polygon points="1126.0,417.6 1127.3,416.9 1127.5,409.7" fill="#3c3631" stroke="#d89858" stroke-width="0.6"/><line x1="1124.1" y1="420.1" x2="1126.0" y2="408.6" stroke="#dcdce6" stroke-width="1.6" /><polygon points="1128.5,409.1 1129.7,408.5 1128.3,416.4" fill="#3c3631" stroke="#d89858" stroke-width="0.6"/><polygon points="1130.1,415.3 1131.3,414.6 1131.6,407.4" fill="#3c3631" stroke="#d89858" stroke-width="0.6"/><line x1="1128.2" y1="417.8" x2="1130.1" y2="406.4" stroke="#dcdce6" stroke-width="1.6" /><polygon points="1132.6,406.9 1133.8,406.3 1132.3,414.1" fill="#3c3631" stroke="#d89858" stroke-width="0.6"/><polygon points="1134.2,413.1 1135.3,412.4 1135.6,405.3" fill="#3c3631" stroke="#d89858" stroke-width="0.6"/><line x1="1132.3" y1="415.5" x2="1134.1" y2="404.2" stroke="#dcdce6" stroke-width="1.6" /><polygon points="1136.5,404.7 1137.7,404.1 1136.3,411.8" fill="#3c3631" stroke="#d89858" stroke-width="0.6"/><polygon points="1138.1,410.8 1139.3,410.2 1139.5,403.1" fill="#3c3631" stroke="#d89858" stroke-width="0.6"/><line x1="1136.2" y1="413.2" x2="1138.1" y2="402.1" stroke="#dcdce6" stroke-width="1.6" /><polygon points="1140.4,402.6 1141.6,402.0 1140.2,409.6" fill="#3c3631" stroke="#d89858" stroke-width="0.6"/><polygon points="1142.0,408.7 1143.1,408.0 1143.4,401.0" fill="#3c3631" stroke="#d89858" stroke-width="0.6"/><line x1="1140.2" y1="411.0" x2="1142.0" y2="400.0" stroke="#dcdce6" stroke-width="1.6" /><polygon points="1144.3,400.5 1145.4,399.9 1144.0,407.5" fill="#3c3631" stroke="#d89858" stroke-width="0.6"/><polygon points="1145.8,406.5 1146.9,405.9 1147.2,398.9" fill="#3c3631" stroke="#d89858" stroke-width="0.6"/><line x1="1144.0" y1="408.9" x2="1145.8" y2="397.9" stroke="#dcdce6" stroke-width="1.6" /><polygon points="1148.1,398.4 1149.2,397.8 1147.8,405.4" fill="#3c3631" stroke="#d89858" stroke-width="0.6"/><polygon points="1149.5,404.4 1150.6,403.8 1150.9,396.9" fill="#3c3631" stroke="#d89858" stroke-width="0.6"/><line x1="1147.8" y1="406.7" x2="1149.5" y2="395.8" stroke="#dcdce6" stroke-width="1.6" /><polygon points="1151.8,396.4 1152.9,395.8 1151.5,403.3" fill="#3c3631" stroke="#d89858" stroke-width="0.6"/><polygon points="1153.2,402.3 1154.3,401.7 1154.6,394.9" fill="#3c3631" stroke="#d89858" stroke-width="0.6"/><line x1="1151.5" y1="404.6" x2="1153.2" y2="393.8" stroke="#dcdce6" stroke-width="1.6" /><polygon points="1155.4,394.4 1156.5,393.8 1155.2,401.2" fill="#3c3631" stroke="#d89858" stroke-width="0.6"/><polygon points="1156.8,400.3 1157.9,399.7 1158.2,392.9" fill="#3c3631" stroke="#d89858" stroke-width="0.6"/><line x1="1155.1" y1="402.6" x2="1156.9" y2="391.9" stroke="#dcdce6" stroke-width="1.6" /><polygon points="1159.0,392.4 1160.1,391.9 1158.8,399.2" fill="#3c3631" stroke="#d89858" stroke-width="0.6"/><polygon points="1160.4,398.3 1161.5,397.7 1161.7,391.0" fill="#3c3631" stroke="#d89858" stroke-width="0.6"/><line x1="1158.7" y1="400.5" x2="1160.4" y2="389.9" stroke="#dcdce6" stroke-width="1.6" /><polygon points="1162.6,390.5 1163.6,389.9 1162.3,397.2" fill="#3c3631" stroke="#d89858" stroke-width="0.6"/><polygon points="1163.9,396.3 1165.0,395.7 1165.2,389.1" fill="#3c3631" stroke="#d89858" stroke-width="0.6"/><line x1="1162.3" y1="398.5" x2="1163.9" y2="388.0" stroke="#dcdce6" stroke-width="1.6" /><polygon points="1166.0,388.6 1167.1,388.0 1165.8,395.3" fill="#3c3631" stroke="#d89858" stroke-width="0.6"/><polygon points="1167.4,394.4 1168.4,393.8 1168.6,387.2" fill="#3c3631" stroke="#d89858" stroke-width="0.6"/><line x1="1165.7" y1="396.6" x2="1167.4" y2="386.2" stroke="#dcdce6" stroke-width="1.6" /><polygon points="1169.4,386.7 1170.5,386.2 1169.2,393.3" fill="#3c3631" stroke="#d89858" stroke-width="0.6"/><polygon points="1170.8,392.5 1171.8,391.9 1172.0,385.3" fill="#3c3631" stroke="#d89858" stroke-width="0.6"/><line x1="1169.2" y1="394.6" x2="1170.8" y2="384.3" stroke="#dcdce6" stroke-width="1.6" /><polygon points="1172.8,384.9 1173.8,384.3 1172.6,391.4" fill="#3c3631" stroke="#d89858" stroke-width="0.6"/><polygon points="1174.1,390.6 1175.1,390.0 1175.3,383.5" fill="#3c3631" stroke="#d89858" stroke-width="0.6"/><line x1="1172.5" y1="392.7" x2="1174.1" y2="382.5" stroke="#dcdce6" stroke-width="1.6" /><polygon points="1176.1,383.1 1177.1,382.5 1175.9,389.6" fill="#3c3631" stroke="#d89858" stroke-width="0.6"/><polygon points="1177.4,388.7 1178.4,388.2 1178.6,381.7" fill="#3c3631" stroke="#d89858" stroke-width="0.6"/><line x1="1175.8" y1="390.9" x2="1177.4" y2="380.7" stroke="#dcdce6" stroke-width="1.6" /><polygon points="1179.4,381.3 1180.3,380.8 1179.1,387.8" fill="#3c3631" stroke="#d89858" stroke-width="0.6"/><polygon points="1180.6,386.9 1181.6,386.4 1181.8,380.0" fill="#3c3631" stroke="#d89858" stroke-width="0.6"/><line x1="1179.1" y1="389.0" x2="1180.7" y2="379.0" stroke="#dcdce6" stroke-width="1.6" /><polygon points="1182.6,379.5 1183.5,379.0 1182.3,386.0" fill="#3c3631" stroke="#d89858" stroke-width="0.6"/><polygon points="1183.8,385.1 1184.8,384.6 1185.0,378.2" fill="#3c3631" stroke="#d89858" stroke-width="0.6"/><line x1="1182.3" y1="387.2" x2="1183.9" y2="377.2" stroke="#dcdce6" stroke-width="1.6" /><polygon points="1185.7,377.8 1186.7,377.3 1185.5,384.2" fill="#3c3631" stroke="#d89858" stroke-width="0.6"/><polygon points="1186.9,383.4 1187.9,382.8 1188.1,376.5" fill="#3c3631" stroke="#d89858" stroke-width="0.6"/><line x1="1185.5" y1="385.4" x2="1187.0" y2="375.5" stroke="#dcdce6" stroke-width="1.6" /><polygon points="1188.9,376.1 1189.8,375.6 1188.6,382.4" fill="#3c3631" stroke="#d89858" stroke-width="0.6"/><polygon points="1190.0,381.6 1190.9,381.1 1191.2,374.8" fill="#3c3631" stroke="#d89858" stroke-width="0.6"/><line x1="1188.6" y1="383.7" x2="1190.1" y2="373.8" stroke="#dcdce6" stroke-width="1.6" /><polygon points="1191.9,374.4 1192.8,374.0 1191.7,380.7" fill="#3c3631" stroke="#d89858" stroke-width="0.6"/><polygon points="1193.1,379.9 1194.0,379.4 1194.2,373.2" fill="#3c3631" stroke="#d89858" stroke-width="0.6"/><line x1="1191.6" y1="381.9" x2="1193.1" y2="372.2" stroke="#dcdce6" stroke-width="1.6" /><polygon points="1194.9,372.8 1195.8,372.3 1194.7,379.0" fill="#3c3631" stroke="#d89858" stroke-width="0.6"/><polygon points="1196.1,378.2 1197.0,377.7 1197.2,371.6" fill="#3c3631" stroke="#d89858" stroke-width="0.6"/><line x1="1194.6" y1="380.2" x2="1196.1" y2="370.6" stroke="#dcdce6" stroke-width="1.6" /><polygon points="1197.9,371.2 1198.8,370.7 1197.7,377.3" fill="#3c3631" stroke="#d89858" stroke-width="0.6"/><polygon points="1199.0,376.6 1199.9,376.1 1200.1,370.0" fill="#3c3631" stroke="#d89858" stroke-width="0.6"/><line x1="1197.6" y1="378.5" x2="1199.1" y2="369.0" stroke="#dcdce6" stroke-width="1.6" /><polygon points="1200.8,369.6 1201.7,369.1 1200.6,375.7" fill="#3c3631" stroke="#d89858" stroke-width="0.6"/><polygon points="1201.9,374.9 1202.8,374.5 1203.0,368.4" fill="#3c3631" stroke="#d89858" stroke-width="0.6"/><line x1="1200.5" y1="376.9" x2="1202.0" y2="367.4" stroke="#dcdce6" stroke-width="1.6" /><polygon points="1203.7,368.0 1204.6,367.5 1203.5,374.1" fill="#3c3631" stroke="#d89858" stroke-width="0.6"/><polygon points="1204.8,373.3 1205.6,372.9 1205.9,366.8" fill="#3c3631" stroke="#d89858" stroke-width="0.6"/><line x1="1203.4" y1="375.3" x2="1204.9" y2="365.8" stroke="#dcdce6" stroke-width="1.6" /><polygon points="1206.5,366.4 1207.4,366.0 1206.3,372.5" fill="#3c3631" stroke="#d89858" stroke-width="0.6"/><polygon points="1207.6,371.7 1208.4,371.3 1208.7,365.3" fill="#3c3631" stroke="#d89858" stroke-width="0.6"/><line x1="1206.3" y1="373.7" x2="1207.7" y2="364.3" stroke="#dcdce6" stroke-width="1.6" /><polygon points="1209.3,364.9 1210.2,364.5 1209.1,370.9" fill="#3c3631" stroke="#d89858" stroke-width="0.6"/><polygon points="1210.4,370.2 1211.2,369.7 1211.4,363.8" fill="#3c3631" stroke="#d89858" stroke-width="0.6"/><line x1="1209.1" y1="372.1" x2="1210.5" y2="362.8" stroke="#dcdce6" stroke-width="1.6" /><polygon points="1212.1,363.4 1212.9,363.0 1211.9,369.4" fill="#3c3631" stroke="#d89858" stroke-width="0.6"/><polygon points="1213.1,368.6 1213.9,368.2 1214.2,362.3" fill="#3c3631" stroke="#d89858" stroke-width="0.6"/><line x1="1211.8" y1="370.5" x2="1213.2" y2="361.3" stroke="#dcdce6" stroke-width="1.6" /><polygon points="1214.8,361.9 1215.6,361.5 1214.6,367.8" fill="#3c3631" stroke="#d89858" stroke-width="0.6"/><polygon points="1215.8,367.1 1216.6,366.7 1216.9,360.8" fill="#3c3631" stroke="#d89858" stroke-width="0.6"/><line x1="1214.5" y1="369.0" x2="1215.9" y2="359.8" stroke="#dcdce6" stroke-width="1.6" /><polygon points="1217.5,360.5 1218.3,360.0 1217.3,366.3" fill="#3c3631" stroke="#d89858" stroke-width="0.6"/><polygon points="1218.5,365.6 1219.3,365.2 1219.5,359.4" fill="#3c3631" stroke="#d89858" stroke-width="0.6"/><line x1="1217.2" y1="367.5" x2="1218.6" y2="358.4" stroke="#dcdce6" stroke-width="1.6" /><polygon points="1220.1,359.0 1220.9,358.6 1219.9,364.8" fill="#3c3631" stroke="#d89858" stroke-width="0.6"/><polygon points="1221.1,364.2 1221.9,363.7 1222.1,357.9" fill="#3c3631" stroke="#d89858" stroke-width="0.6"/><line x1="1219.9" y1="366.0" x2="1221.2" y2="357.0" stroke="#dcdce6" stroke-width="1.6" /><polygon points="1222.7,357.6 1223.5,357.2 1222.5,363.4" fill="#3c3631" stroke="#d89858" stroke-width="0.6"/><polygon points="1223.7,362.7 1224.5,362.3 1224.7,356.5" fill="#3c3631" stroke="#d89858" stroke-width="0.6"/><line x1="1222.5" y1="364.5" x2="1223.8" y2="355.5" stroke="#dcdce6" stroke-width="1.6" /><polygon points="1225.3,356.2 1226.1,355.8 1225.1,361.9" fill="#3c3631" stroke="#d89858" stroke-width="0.6"/><polygon points="1226.2,361.3 1227.0,360.8 1227.2,355.1" fill="#3c3631" stroke="#d89858" stroke-width="0.6"/><line x1="1225.0" y1="363.0" x2="1226.3" y2="354.2" stroke="#dcdce6" stroke-width="1.6" /><polyline points="211.6,899.8 1225.8,353.1" fill="none" stroke="#aaaac8" stroke-width="5.5" /><polyline points="212.5,940.8 1225.3,364.3" fill="none" stroke="#a6a6c0" stroke-width="2" /><polygon points="92.7,884.9 211.1,897.0 212.1,944.1 211.1,932.5 154.0,930.3 94.8,933.5" fill="#aeaec8" /><polygon points="99.0,894.4 111.7,894.4 104.3,921.9" fill="#3a3632" stroke="#e09a50" stroke-width="0.7"/><polygon points="119.1,895.5 129.7,907.1 119.1,913.4" fill="#3a3632" stroke="#e09a50" stroke-width="0.7"/><polygon points="129.7,897.6 148.7,899.7 139.2,902.9" fill="#3a3632" stroke="#e09a50" stroke-width="0.7"/><polygon points="128.6,917.7 154.0,905.0 194.2,907.6 172.0,921.9" fill="#3a3632" stroke="#e09a50" stroke-width="0.7"/><polygon points="185.7,922.9 210.0,911.3 210.0,926.1" fill="#3a3632" stroke="#e09a50" stroke-width="0.7"/><polygon points="118.1,924.5 154.0,924.0 210.0,928.8 210.0,931.4 154.0,928.8" fill="#3a3632" stroke="#e09a50" stroke-width="0.7"/><line x1="154.0" y1="934.6" x2="210.0" y2="905.0" stroke="#b0b0c8" stroke-width="4.5" /><line x1="99.0" y1="918.7" x2="111.7" y2="894.4" stroke="#d0d0dc" stroke-width="2" /><polygon points="727.0,149.0 740.0,149.0 764.7,450.0 767.5,768.0 731.0,768.0 731.0,474.0 727.0,177.0" fill="#b3b3b7" /><polygon points="735.0,160.0 740.0,149.0 764.7,450.0 767.5,768.0 753.0,768.0 750.0,450.0" fill="#a3a3c3" /><polygon points="749.0,781.0 771.0,770.0 772.0,797.0 749.0,805.0" fill="#b0b0c8" /><polygon points="733.0,325.0 756.0,326.0 756.0,331.0 733.0,331.0" fill="#ececf4" /><polygon points="736.0,442.0 761.0,443.0 761.0,448.0 736.0,447.0" fill="#ececf4" /><line x1="280.5" y1="812.2" x2="281.3" y2="859.3" stroke="#d6b894" stroke-width="1.2" /><line x1="280.2" y1="790.2" x2="281.3" y2="859.3" stroke="#b0b0c4" stroke-width="1.7" /><line x1="331.2" y1="748.1" x2="332.3" y2="831.9" stroke="#d6b894" stroke-width="1.2" /><line x1="331.4" y1="765.5" x2="332.3" y2="831.9" stroke="#b0b0c4" stroke-width="1.7" /><line x1="378.3" y1="686.8" x2="379.4" y2="806.6" stroke="#d6b894" stroke-width="1.2" /><line x1="378.8" y1="742.8" x2="379.4" y2="806.6" stroke="#b0b0c4" stroke-width="1.7" /><line x1="422.1" y1="628.0" x2="423.2" y2="783.1" stroke="#d6b894" stroke-width="1.2" /><line x1="422.8" y1="721.7" x2="423.2" y2="783.1" stroke="#b0b0c4" stroke-width="1.7" /><line x1="463.0" y1="571.5" x2="463.9" y2="761.3" stroke="#d6b894" stroke-width="1.2" /><line x1="463.6" y1="702.0" x2="463.9" y2="761.3" stroke="#b0b0c4" stroke-width="1.7" /><line x1="501.4" y1="516.9" x2="501.9" y2="740.9" stroke="#d6b894" stroke-width="1.2" /><line x1="501.7" y1="683.7" x2="501.9" y2="740.9" stroke="#b0b0c4" stroke-width="1.7" /><line x1="537.3" y1="464.3" x2="537.3" y2="721.8" stroke="#d6b894" stroke-width="1.2" /><line x1="537.3" y1="666.6" x2="537.3" y2="721.8" stroke="#b0b0c4" stroke-width="1.7" /><line x1="571.1" y1="413.2" x2="570.6" y2="704.0" stroke="#d6b894" stroke-width="1.2" /><line x1="570.7" y1="650.6" x2="570.6" y2="704.0" stroke="#b0b0c4" stroke-width="1.7" /><line x1="603.0" y1="363.7" x2="601.8" y2="687.3" stroke="#d6b894" stroke-width="1.2" /><line x1="602.0" y1="635.5" x2="601.8" y2="687.3" stroke="#b0b0c4" stroke-width="1.7" /><line x1="633.1" y1="315.5" x2="631.1" y2="671.5" stroke="#d6b894" stroke-width="1.2" /><line x1="631.4" y1="621.4" x2="631.1" y2="671.5" stroke="#b0b0c4" stroke-width="1.7" /><line x1="661.5" y1="268.6" x2="658.8" y2="656.6" stroke="#d6b894" stroke-width="1.2" /><line x1="659.1" y1="608.0" x2="658.8" y2="656.6" stroke="#b0b0c4" stroke-width="1.7" /><line x1="688.5" y1="222.7" x2="684.9" y2="642.6" stroke="#d6b894" stroke-width="1.2" /><line x1="685.3" y1="595.4" x2="684.9" y2="642.6" stroke="#b0b0c4" stroke-width="1.7" /><line x1="714.1" y1="177.9" x2="709.6" y2="629.4" stroke="#d6b894" stroke-width="1.2" /><line x1="710.1" y1="583.5" x2="709.6" y2="629.4" stroke="#b0b0c4" stroke-width="1.7" /><line x1="760.5" y1="178.7" x2="755.1" y2="604.9" stroke="#d6b894" stroke-width="1.2" /><line x1="755.7" y1="561.5" x2="755.1" y2="604.9" stroke="#b0b0c4" stroke-width="1.7" /><line x1="781.5" y1="208.7" x2="776.2" y2="593.6" stroke="#d6b894" stroke-width="1.2" /><line x1="776.8" y1="551.4" x2="776.2" y2="593.6" stroke="#b0b0c4" stroke-width="1.7" /><line x1="801.4" y1="235.7" x2="796.2" y2="582.9" stroke="#d6b894" stroke-width="1.2" /><line x1="796.8" y1="541.7" x2="796.2" y2="582.9" stroke="#b0b0c4" stroke-width="1.7" /><line x1="820.3" y1="260.0" x2="815.2" y2="572.7" stroke="#d6b894" stroke-width="1.2" /><line x1="815.9" y1="532.5" x2="815.2" y2="572.7" stroke="#b0b0c4" stroke-width="1.7" /><line x1="838.2" y1="281.8" x2="833.4" y2="562.9" stroke="#d6b894" stroke-width="1.2" /><line x1="834.1" y1="523.8" x2="833.4" y2="562.9" stroke="#b0b0c4" stroke-width="1.7" /><line x1="855.3" y1="301.3" x2="850.7" y2="553.6" stroke="#d6b894" stroke-width="1.2" /><line x1="851.4" y1="515.4" x2="850.7" y2="553.6" stroke="#b0b0c4" stroke-width="1.7" /><line x1="871.6" y1="318.7" x2="867.2" y2="544.7" stroke="#d6b894" stroke-width="1.2" /><line x1="868.0" y1="507.5" x2="867.2" y2="544.7" stroke="#b0b0c4" stroke-width="1.7" /><line x1="887.2" y1="334.0" x2="883.1" y2="536.3" stroke="#d6b894" stroke-width="1.2" /><line x1="883.8" y1="499.8" x2="883.1" y2="536.3" stroke="#b0b0c4" stroke-width="1.7" /><line x1="902.0" y1="347.6" x2="898.2" y2="528.1" stroke="#d6b894" stroke-width="1.2" /><line x1="899.0" y1="492.5" x2="898.2" y2="528.1" stroke="#b0b0c4" stroke-width="1.7" /><line x1="916.2" y1="359.4" x2="912.7" y2="520.3" stroke="#d6b894" stroke-width="1.2" /><line x1="913.5" y1="485.5" x2="912.7" y2="520.3" stroke="#b0b0c4" stroke-width="1.7" /><line x1="929.9" y1="369.6" x2="926.6" y2="512.9" stroke="#d6b894" stroke-width="1.2" /><line x1="927.4" y1="478.8" x2="926.6" y2="512.9" stroke="#b0b0c4" stroke-width="1.7" /><line x1="943.0" y1="378.4" x2="940.0" y2="505.7" stroke="#d6b894" stroke-width="1.2" /><line x1="940.8" y1="472.4" x2="940.0" y2="505.7" stroke="#b0b0c4" stroke-width="1.7" /><line x1="955.5" y1="385.7" x2="952.8" y2="498.8" stroke="#d6b894" stroke-width="1.2" /><line x1="953.6" y1="466.2" x2="952.8" y2="498.8" stroke="#b0b0c4" stroke-width="1.7" /><line x1="967.6" y1="391.8" x2="965.1" y2="492.2" stroke="#d6b894" stroke-width="1.2" /><line x1="965.9" y1="460.2" x2="965.1" y2="492.2" stroke="#b0b0c4" stroke-width="1.7" /><line x1="979.3" y1="396.6" x2="977.0" y2="485.8" stroke="#d6b894" stroke-width="1.2" /><line x1="977.8" y1="454.5" x2="977.0" y2="485.8" stroke="#b0b0c4" stroke-width="1.7" /><line x1="990.5" y1="400.3" x2="988.4" y2="479.7" stroke="#d6b894" stroke-width="1.2" /><line x1="989.2" y1="449.0" x2="988.4" y2="479.7" stroke="#b0b0c4" stroke-width="1.7" /><line x1="1001.3" y1="402.9" x2="999.4" y2="473.8" stroke="#d6b894" stroke-width="1.2" /><line x1="1000.2" y1="443.7" x2="999.4" y2="473.8" stroke="#b0b0c4" stroke-width="1.7" /><line x1="1011.8" y1="404.6" x2="1010.0" y2="468.1" stroke="#d6b894" stroke-width="1.2" /><line x1="1010.8" y1="438.6" x2="1010.0" y2="468.1" stroke="#b0b0c4" stroke-width="1.7" /><line x1="1021.9" y1="405.3" x2="1020.2" y2="462.6" stroke="#d6b894" stroke-width="1.2" /><line x1="1021.1" y1="433.6" x2="1020.2" y2="462.6" stroke="#b0b0c4" stroke-width="1.7" /><line x1="1031.6" y1="405.1" x2="1030.1" y2="457.3" stroke="#d6b894" stroke-width="1.2" /><line x1="1030.9" y1="428.9" x2="1030.1" y2="457.3" stroke="#b0b0c4" stroke-width="1.7" /><line x1="1041.1" y1="404.1" x2="1039.7" y2="452.2" stroke="#d6b894" stroke-width="1.2" /><line x1="1040.5" y1="424.3" x2="1039.7" y2="452.2" stroke="#b0b0c4" stroke-width="1.7" /><line x1="1050.2" y1="402.3" x2="1048.9" y2="447.2" stroke="#d6b894" stroke-width="1.2" /><line x1="1049.7" y1="419.8" x2="1048.9" y2="447.2" stroke="#b0b0c4" stroke-width="1.7" /><line x1="1059.1" y1="399.8" x2="1057.8" y2="442.5" stroke="#d6b894" stroke-width="1.2" /><line x1="1058.6" y1="415.5" x2="1057.8" y2="442.5" stroke="#b0b0c4" stroke-width="1.7" /><line x1="1067.7" y1="396.6" x2="1066.4" y2="437.8" stroke="#d6b894" stroke-width="1.2" /><line x1="1067.2" y1="411.4" x2="1066.4" y2="437.8" stroke="#b0b0c4" stroke-width="1.7" /><line x1="1076.0" y1="392.9" x2="1074.8" y2="433.3" stroke="#d6b894" stroke-width="1.2" /><line x1="1075.6" y1="407.3" x2="1074.8" y2="433.3" stroke="#b0b0c4" stroke-width="1.7" /><line x1="1084.1" y1="388.6" x2="1082.9" y2="429.0" stroke="#d6b894" stroke-width="1.2" /><line x1="1083.7" y1="403.4" x2="1082.9" y2="429.0" stroke="#b0b0c4" stroke-width="1.7" /><line x1="1092.0" y1="383.8" x2="1090.7" y2="424.8" stroke="#d6b894" stroke-width="1.2" /><line x1="1091.5" y1="399.6" x2="1090.7" y2="424.8" stroke="#b0b0c4" stroke-width="1.7" /><line x1="1099.7" y1="378.4" x2="1098.3" y2="420.7" stroke="#d6b894" stroke-width="1.2" /><line x1="1099.1" y1="396.0" x2="1098.3" y2="420.7" stroke="#b0b0c4" stroke-width="1.7" /><line x1="1107.1" y1="372.5" x2="1105.7" y2="416.8" stroke="#d6b894" stroke-width="1.2" /><line x1="1106.5" y1="392.4" x2="1105.7" y2="416.8" stroke="#b0b0c4" stroke-width="1.7" /><line x1="1114.4" y1="366.1" x2="1112.8" y2="412.9" stroke="#d6b894" stroke-width="1.2" /><line x1="1113.6" y1="389.0" x2="1112.8" y2="412.9" stroke="#b0b0c4" stroke-width="1.7" /><line x1="1121.5" y1="359.1" x2="1119.8" y2="409.2" stroke="#d6b894" stroke-width="1.2" /><line x1="1120.6" y1="385.6" x2="1119.8" y2="409.2" stroke="#b0b0c4" stroke-width="1.7" /><line x1="1128.4" y1="351.6" x2="1126.5" y2="405.6" stroke="#d6b894" stroke-width="1.2" /><line x1="1127.3" y1="382.4" x2="1126.5" y2="405.6" stroke="#b0b0c4" stroke-width="1.7" /><line x1="1135.1" y1="343.7" x2="1133.1" y2="402.0" stroke="#d6b894" stroke-width="1.2" /><line x1="1133.9" y1="379.2" x2="1133.1" y2="402.0" stroke="#b0b0c4" stroke-width="1.7" /><line x1="1141.7" y1="335.2" x2="1139.4" y2="398.6" stroke="#d6b894" stroke-width="1.2" /><line x1="1140.2" y1="376.1" x2="1139.4" y2="398.6" stroke="#b0b0c4" stroke-width="1.7" /><line x1="1148.1" y1="326.3" x2="1145.6" y2="395.3" stroke="#d6b894" stroke-width="1.2" /><line x1="1146.4" y1="373.1" x2="1145.6" y2="395.3" stroke="#b0b0c4" stroke-width="1.7" /><line x1="1154.3" y1="317.0" x2="1151.7" y2="392.1" stroke="#d6b894" stroke-width="1.2" /><line x1="1152.4" y1="370.2" x2="1151.7" y2="392.1" stroke="#b0b0c4" stroke-width="1.7" /><line x1="1160.5" y1="307.2" x2="1157.5" y2="388.9" stroke="#d6b894" stroke-width="1.2" /><line x1="1158.3" y1="367.4" x2="1157.5" y2="388.9" stroke="#b0b0c4" stroke-width="1.7" /><line x1="1166.5" y1="297.0" x2="1163.2" y2="385.8" stroke="#d6b894" stroke-width="1.2" /><line x1="1164.0" y1="364.7" x2="1163.2" y2="385.8" stroke="#b0b0c4" stroke-width="1.7" /><line x1="1172.3" y1="286.4" x2="1168.8" y2="382.9" stroke="#d6b894" stroke-width="1.2" /><line x1="1169.6" y1="362.0" x2="1168.8" y2="382.9" stroke="#b0b0c4" stroke-width="1.7" /><line x1="1178.1" y1="275.3" x2="1174.2" y2="379.9" stroke="#d6b894" stroke-width="1.2" /><line x1="1175.0" y1="359.4" x2="1174.2" y2="379.9" stroke="#b0b0c4" stroke-width="1.7" /><line x1="1183.7" y1="263.9" x2="1179.5" y2="377.1" stroke="#d6b894" stroke-width="1.2" /><line x1="1180.3" y1="356.8" x2="1179.5" y2="377.1" stroke="#b0b0c4" stroke-width="1.7" /><line x1="1189.2" y1="252.1" x2="1184.6" y2="374.4" stroke="#d6b894" stroke-width="1.2" /><line x1="1185.4" y1="354.3" x2="1184.6" y2="374.4" stroke="#b0b0c4" stroke-width="1.7" /><line x1="1194.7" y1="240.0" x2="1189.7" y2="371.7" stroke="#d6b894" stroke-width="1.2" /><line x1="1190.4" y1="351.9" x2="1189.7" y2="371.7" stroke="#b0b0c4" stroke-width="1.7" /><line x1="1200.0" y1="227.4" x2="1194.6" y2="369.0" stroke="#d6b894" stroke-width="1.2" /><line x1="1195.3" y1="349.5" x2="1194.6" y2="369.0" stroke="#b0b0c4" stroke-width="1.7" /><line x1="1205.2" y1="214.6" x2="1199.3" y2="366.5" stroke="#d6b894" stroke-width="1.2" /><line x1="1200.1" y1="347.2" x2="1199.3" y2="366.5" stroke="#b0b0c4" stroke-width="1.7" /><line x1="1210.3" y1="201.3" x2="1204.0" y2="364.0" stroke="#d6b894" stroke-width="1.2" /><line x1="1204.7" y1="345.0" x2="1204.0" y2="364.0" stroke="#b0b0c4" stroke-width="1.7" /><line x1="1215.3" y1="187.8" x2="1208.6" y2="361.5" stroke="#d6b894" stroke-width="1.2" /><line x1="1209.3" y1="342.8" x2="1208.6" y2="361.5" stroke="#b0b0c4" stroke-width="1.7" /><line x1="1220.3" y1="173.9" x2="1213.0" y2="359.1" stroke="#d6b894" stroke-width="1.2" /><line x1="1213.7" y1="340.6" x2="1213.0" y2="359.1" stroke="#b0b0c4" stroke-width="1.7" /><line x1="1225.1" y1="159.7" x2="1217.4" y2="356.8" stroke="#d6b894" stroke-width="1.2" /><line x1="1218.1" y1="338.5" x2="1217.4" y2="356.8" stroke="#b0b0c4" stroke-width="1.7" /><polyline points="211.6,896.7 232.3,871.7 252.4,847.1 272.0,822.9 291.0,799.2 309.5,775.9 327.5,752.9 345.0,730.4 362.0,708.2 378.6,686.3 394.8,664.8 410.6,643.6 426.0,622.7 441.0,602.0 455.7,581.7 470.0,561.6 484.0,541.8 497.7,522.3 511.0,503.0 524.0,483.9 536.8,465.0 549.3,446.4 561.5,428.0 573.4,409.7 585.1,391.7 596.5,373.8 607.8,356.1 618.7,338.6 629.5,321.3 640.0,304.1 650.4,287.1 660.5,270.3 670.4,253.6 680.2,237.0 689.8,220.6 699.2,204.3 708.4,188.1 717.4,172.1 726.3,156.1 735.0,140.3" fill="none" stroke="#aca6bc" stroke-width="2.8" /><polyline points="735.0,140.3 744.6,154.9 753.9,168.8 762.9,182.2 771.8,195.0 780.5,207.2 789.0,218.9 797.3,230.2 805.4,240.9 813.3,251.2 821.1,261.0 828.7,270.4 836.1,279.3 843.4,287.9 850.6,296.0 857.6,303.8 864.4,311.2 871.2,318.2 877.8,324.9 884.3,331.3 890.6,337.3 896.9,343.0 903.0,348.4 909.0,353.5 914.9,358.3 920.7,362.9 926.4,367.1 932.0,371.1 937.5,374.8 942.9,378.3 948.3,381.6 953.5,384.6 958.6,387.4 963.7,389.9 968.7,392.2 973.6,394.4 978.5,396.3 983.2,398.0 987.9,399.5 992.5,400.9 997.1,402.0 1001.5,403.0 1006.0,403.8 1010.3,404.4 1014.6,404.9 1018.8,405.1 1023.0,405.3 1027.1,405.3 1031.2,405.1 1035.2,404.8 1039.1,404.3 1043.0,403.8 1046.8,403.0 1050.6,402.2 1054.4,401.2 1058.1,400.1 1061.7,398.9 1065.3,397.6 1068.9,396.1 1072.4,394.6 1075.8,393.0 1079.3,391.3 1082.6,389.5 1086.0,387.6 1089.3,385.5 1092.5,383.4 1095.8,381.3 1099.0,379.0 1102.1,376.6 1105.2,374.1 1108.3,371.5 1111.4,368.8 1114.4,366.1 1117.4,363.2 1120.3,360.3 1123.2,357.2 1126.1,354.1 1129.0,350.9 1131.8,347.6 1134.6,344.2 1137.4,340.8 1140.1,337.2 1142.9,333.6 1145.5,329.9 1148.2,326.1 1150.9,322.3 1153.5,318.3 1156.1,314.3 1158.6,310.2 1161.2,306.0 1163.7,301.8 1166.2,297.5 1168.7,293.1 1171.1,288.6 1173.5,284.1 1176.0,279.5 1178.3,274.8 1180.7,270.1 1183.1,265.3 1185.4,260.4 1187.7,255.5 1190.0,250.5 1192.3,245.4 1194.5,240.3 1196.8,235.1 1199.0,229.8 1201.2,224.5 1203.4,219.1 1205.5,213.6 1207.7,208.1 1209.8,202.6 1212.0,197.0 1214.1,191.3 1216.1,185.5 1218.2,179.7 1220.3,173.9 1222.3,168.0 1224.4,162.0 1226.4,156.0 1228.4,149.9" fill="none" stroke="#aca6bc" stroke-width="2.8" /><g clip-path="url(#twc)"><line x1="688.5" y1="222.7" x2="684.9" y2="642.6" stroke="#a8a8c4" stroke-width="1.1" /><line x1="714.1" y1="177.9" x2="709.6" y2="629.4" stroke="#a8a8c4" stroke-width="1.1" /></g></g></svg>
<svg width="1920" height="1041" viewBox="0 0 1920 1041" style="left:0px;top:0px;"><circle cx="1233.2" cy="232.6" r="113.6" fill="#343b3f"/><rect x="1119.5" y="347" width="227.5" height="43.6" fill="#343b3f"/><polygon points="1148.6,258.9 1166.7,167.1 1218.7,167.1 1216.7,178.2 1177.3,178.2 1172.8,204.4 1207.6,204.4 1205.6,215.5 1170.8,215.5 1161.2,258.9" fill="#fdfdfd"/><polygon points="1220.5,258.9 1238.7,167.1 1256.9,167.1 1267.5,227.6 1303.8,167.1 1321.9,167.1 1304.3,258.9 1292.2,258.9 1307.3,180.2 1272.0,241.7 1259.9,241.7 1248.8,179.2 1232.7,258.9" fill="#23a5de"/></svg>
<div class="t" style="left:1149.5px;top:263.6px;font-size:13.5px;line-height:13.5px;color:#23a5de;letter-spacing:0.83px">FRANCESCO MILANESE</div>
<div class="t" style="left:1172.5px;top:283.0px;font-size:21.3px;line-height:21.3px;color:#fafafa;font-style:italic;transform:scaleX(1.2);transform-origin:0 0">3D Models</div>
<div class="t" style="left:1138.5px;top:356.8px;font-size:24.4px;line-height:24.4px;color:#c5c50c;font-style:italic;font-weight:bold;transform:scaleX(1.175);transform-origin:0 0">Stock Models</div>
<svg width="1920" height="1041" viewBox="0 0 1920 1041" style="left:0px;top:0px;"><path d="M1016 544L1034 537L1084 537L1066 548Z" fill="#6a6a6a" opacity="0.5"/><line x1="1051.2" y1="541.8" x2="1050.7" y2="477" stroke="#2020e0" stroke-width="2"/><polygon points="1046.2,478 1056.2,478 1051.2,459" fill="#2222e8"/><line x1="1051.2" y1="541.8" x2="986" y2="540.3" stroke="#20c020" stroke-width="2"/><polygon points="987,535 987,545 968,539.5" fill="#22d022"/><circle cx="1051.2" cy="541.8" r="14.5" fill="none" stroke="#ffffff" stroke-width="2" stroke-dasharray="5 3"/><circle cx="1051.2" cy="541.8" r="14.5" fill="none" stroke="#a02020" stroke-width="2" stroke-dasharray="3 5" stroke-dashoffset="-5"/><path d="M1025 541.8H1043M1059 541.8H1077M1051.2 520V533M1051.2 550V568" stroke="#000" stroke-width="1.3"/><circle cx="1051.2" cy="541.8" r="2.6" fill="#e0904a"/></svg>
<svg width="60" height="50" viewBox="0 0 60 50" style="left:0px;top:940px;"><line x1="26" y1="17" x2="26" y2="41.5" stroke="#2828d8" stroke-width="2"/><line x1="2" y1="41.5" x2="26" y2="41.5" stroke="#22bb22" stroke-width="2"/><line x1="26" y1="41.5" x2="32" y2="38" stroke="#c02020" stroke-width="2"/><text x="28" y="15" font-size="11" fill="#3838e0" font-family="Liberation Sans">z</text><text x="4" y="38" font-size="11" fill="#30c030" font-family="Liberation Sans">y</text><text x="37" y="36" font-size="10" fill="#c03030" font-family="Liberation Sans">x</text></svg>
<div class="b " style="left:0.0px;top:83.0px;width:16.0px;height:19.0px;background:#2f2f2f;border-radius:0 4px 4px 0"></div>
<svg width="10" height="10" viewBox="0 0 10 10" style="left:3px;top:88px;"><path d="M5 1V9M1 5H9" stroke="#8a8a8a" stroke-width="2.5"/></svg>
<div class="t" style="left:25.0px;top:70.3px;font-size:14px;line-height:14px;color:#f2f2f2;text-shadow:1px 1px 1px #000">User Persp</div>
<div class="t" style="left:25.0px;top:95.0px;font-size:14px;line-height:14px;color:#f2f2f2;text-shadow:1px 1px 1px #000">Meters</div>
<div class="t" style="left:75.0px;top:983.1px;font-size:14px;line-height:14px;color:#f2f2f2;text-shadow:1px 1px 1px #000">(1) suspension_bridge</div>
<div class="b " style="left:0.0px;top:56.0px;width:1.0px;height:952.0px;background:#565656;"></div>
<div class="b " style="left:0.0px;top:0.0px;width:1920.0px;height:23.0px;background:#fff;"></div>
<div class="t" style="left:23.0px;top:5.8px;font-size:12px;line-height:12px;color:#8a8a8a;letter-spacing:-0.24px">Blender* [C:\Users\franc\Desktop\SUSPENSION_BRIDGE\suspension_bridge.blend]</div>
<svg width="1920" height="23" viewBox="0 0 1920 23" style="left:0px;top:0px;"><rect x="1799" y="10" width="12" height="1" fill="#333"/><rect x="1844.5" y="6.5" width="8" height="8" fill="none" stroke="#333"/><path d="M1846.5 6.5V4.5h8v8h-2" fill="none" stroke="#333"/><path d="M1889.5 4.5l10 10M1899.5 4.5l-10 10" stroke="#333" stroke-width="1.1"/><path d="M3 8.5L9 6.5L7 10Z" fill="#e87d0d"/><circle cx="11.5" cy="10.5" r="5.5" fill="#e87d0d"/><circle cx="12" cy="10.5" r="3.3" fill="#fff"/><circle cx="12" cy="10.5" r="1.9" fill="#265787"/></svg>
<div class="b " style="left:0.0px;top:23.0px;width:1920.0px;height:32.0px;background:#727272;"></div>
<div class="b " style="left:0.0px;top:55.0px;width:1920.0px;height:1.0px;background:#0c0c0c;"></div>
<svg width="14" height="16" viewBox="0 0 14 16" style="left:0px;top:40px;"><path d="M0 2L13 15M0 6L9 15M0 10L5 15" stroke="#222" stroke-width="1"/><path d="M0 3L12 15M0 7L8 15M0 11L4 15" stroke="#aaa" stroke-width="1"/></svg>
<div class="b menu" style="left:10.0px;top:28.0px;width:40.0px;height:25.0px;"></div>
<svg width="19" height="19" viewBox="0 0 19 19" style="left:16px;top:31px;"><circle cx="9.5" cy="9.5" r="8.5" fill="#0e1530"/><circle cx="9.5" cy="9.5" r="7.3" fill="#4c6aa8" stroke="#a9c0e8" stroke-width="1"/><rect x="8.3" y="4" width="2.6" height="2.4" fill="#fff"/><path d="M7.3 8h3.6v6h1.2v1.5h-5v-1.5h1.2v-4.5h-1z" fill="#fff"/></svg>
<svg width="8" height="16" style="left:38px;top:33px"><path d="M0.5 6.5L4 1L7.5 6.5Z M0.5 9.5L4 15L7.5 9.5Z" fill="#bdbdbd"/></svg>
<div class="b " style="left:102.0px;top:28.0px;width:64.0px;height:25.0px;background:#5680c2;border-radius:4px"></div>
<div class="t" style="left:65.5px;top:34.6px;font-size:14px;line-height:14px;color:#000;">File</div>
<div class="t" style="left:112.0px;top:34.6px;font-size:14px;line-height:14px;color:#000;">Render</div>
<div class="t" style="left:183.0px;top:34.6px;font-size:14px;line-height:14px;color:#000;">Window</div>
<div class="t" style="left:259.0px;top:34.6px;font-size:14px;line-height:14px;color:#000;">Help</div>
<div class="b " style="left:303.0px;top:28.0px;width:239.0px;height:25.0px;border:1px solid #1a1a1a;border-radius:5px;overflow:hidden;background:#999"></div>
<div class="b " style="left:303.0px;top:28.0px;width:39.0px;height:25.0px;background:linear-gradient(#545454,#3c3c3c);border:1px solid #1a1a1a;border-radius:5px 0 0 5px"></div>
<div class="b " style="left:342.0px;top:29.0px;width:150.0px;height:23.0px;background:linear-gradient(#9b9b9b,#b1b1b1)"></div>
<div class="b " style="left:492.0px;top:29.0px;width:25.0px;height:23.0px;background:linear-gradient(#a3a3a3,#939393);border-left:1px solid #1e1e1e"></div>
<div class="b " style="left:517.0px;top:29.0px;width:24.0px;height:23.0px;background:linear-gradient(#a3a3a3,#939393);border-left:1px solid #1e1e1e;border-radius:0 4px 4px 0"></div>
<div class="t" style="left:352.0px;top:34.6px;font-size:14px;line-height:14px;color:#000;">Default</div>
<svg width="16" height="16" style="left:496.5px;top:32.5px"><path d="M8.0 1V15M1 8.0H15" stroke="#111" stroke-width="5"/><path d="M8.0 2V14M2 8.0H14" stroke="#fff" stroke-width="2.6"/></svg>
<svg width="16" height="16" style="left:521.5px;top:32.5px"><path d="M2 2L14 14M14 2L2 14" stroke="#111" stroke-width="5"/><path d="M2.6 2.6L13.4 13.4M13.4 2.6L2.6 13.4" stroke="#fff" stroke-width="2.4"/></svg>
<svg width="16" height="18" viewBox="0 0 16 18" style="left:310px;top:32px;"><rect x="0.5" y="0.5" width="7" height="8" fill="#eee" stroke="#111"/><rect x="0.5" y="9.5" width="7" height="7.5" fill="#eee" stroke="#111"/><rect x="8.5" y="0.5" width="7" height="16.5" fill="#eee" stroke="#111"/><rect x="2" y="14" width="4" height="1.5" fill="#777"/><rect x="10" y="14" width="4" height="1.5" fill="#777"/></svg>
<svg width="8" height="16" style="left:331px;top:33px"><path d="M0.5 6.5L4 1L7.5 6.5Z M0.5 9.5L4 15L7.5 9.5Z" fill="#bdbdbd"/></svg>
<div class="b " style="left:549.0px;top:28.0px;width:239.0px;height:25.0px;border:1px solid #1a1a1a;border-radius:5px;overflow:hidden;background:#999"></div>
<div class="b " style="left:549.0px;top:28.0px;width:39.0px;height:25.0px;background:linear-gradient(#545454,#3c3c3c);border:1px solid #1a1a1a;border-radius:5px 0 0 5px"></div>
<div class="b " style="left:588.0px;top:29.0px;width:150.0px;height:23.0px;background:linear-gradient(#9b9b9b,#b1b1b1)"></div>
<div class="b " style="left:738.0px;top:29.0px;width:25.0px;height:23.0px;background:linear-gradient(#a3a3a3,#939393);border-left:1px solid #1e1e1e"></div>
<div class="b " style="left:763.0px;top:29.0px;width:24.0px;height:23.0px;background:linear-gradient(#a3a3a3,#939393);border-left:1px solid #1e1e1e;border-radius:0 4px 4px 0"></div>
<div class="t" style="left:598.0px;top:34.6px;font-size:14px;line-height:14px;color:#000;">Scene</div>
<svg width="16" height="16" style="left:742.5px;top:32.5px"><path d="M8.0 1V15M1 8.0H15" stroke="#111" stroke-width="5"/><path d="M8.0 2V14M2 8.0H14" stroke="#fff" stroke-width="2.6"/></svg>
<svg width="16" height="16" style="left:767.5px;top:32.5px"><path d="M2 2L14 14M14 2L2 14" stroke="#111" stroke-width="5"/><path d="M2.6 2.6L13.4 13.4M13.4 2.6L2.6 13.4" stroke="#fff" stroke-width="2.4"/></svg>
<svg width="26" height="20" viewBox="0 0 26 20" style="left:556px;top:31px;"><circle cx="4" cy="3.5" r="3" fill="#e3e36a" opacity="0.8"/><rect x="10" y="3" width="7" height="12" rx="3" fill="#5d86cf" stroke="#1c2a50"/><circle cx="7.5" cy="14.5" r="4.5" fill="#ddd" stroke="#111"/></svg>
<svg width="8" height="16" style="left:577px;top:33px"><path d="M0.5 6.5L4 1L7.5 6.5Z M0.5 9.5L4 15L7.5 9.5Z" fill="#bdbdbd"/></svg>
<div class="b menu" style="left:808.0px;top:28.0px;width:141.0px;height:25.0px;"></div>
<div class="t" style="left:818.0px;top:34.6px;font-size:14px;line-height:14px;color:#fff;">Cycles Render</div>
<svg width="8" height="16" style="left:937px;top:33px"><path d="M0.5 6.5L4 1L7.5 6.5Z M0.5 9.5L4 15L7.5 9.5Z" fill="#bdbdbd"/></svg>
<svg width="22" height="20" viewBox="0 0 22 20" style="left:971px;top:31px;"><path d="M1 9L9 5L7 12Z" fill="#e87d0d" stroke="#333" stroke-width="0.6"/><circle cx="13" cy="11" r="7" fill="#e87d0d" stroke="#5a3000" stroke-width="0.8"/><circle cx="13.5" cy="11" r="4" fill="#fff"/><circle cx="13.5" cy="11" r="2.4" fill="#2e5c9a"/></svg>
<div class="t" style="left:1004.5px;top:34.9px;font-size:14px;line-height:14px;color:#000;letter-spacing:0.17px">v2.79 | Verts:270,130 | Faces:271,414 | Tris:542,828 | Objects:1/1 | Lamps:0/0 | Mem:392.23M | suspension_bridge</div>
<div class="b " style="left:1396.0px;top:56.0px;width:224.0px;height:952.0px;background:#727272;"></div>
<div class="b " style="left:1396.0px;top:56.0px;width:1.0px;height:952.0px;background:#7f7f7f;"></div>
<div class="b " style="left:1620.0px;top:56.0px;width:1.0px;height:985.0px;background:#0c0c0c;"></div>
<div class="b " style="left:1598.5px;top:62.0px;width:16.0px;height:940.0px;background:#616161;border:1px solid #4c4c4c;border-radius:8px"></div>
<div class="b " style="left:1598.5px;top:62.0px;width:16.0px;height:573.0px;background:linear-gradient(90deg,#8a8a8a,#9c9c9c 40%,#8e8e8e);border:1px solid #3a3a3a;border-radius:8px"></div>
<svg width="17" height="17" viewBox="0 0 17 17" style="left:1603px;top:56px;overflow:hidden"><path d="M1 0L17 16M6 0L17 11M11 0L17 6" stroke="#1a1a1a" stroke-width="1.1"/><path d="M2 0L17 15M7 0L17 10M12 0L17 5" stroke="#a8a8a8" stroke-width="0.7"/></svg>
<svg width="10" height="11" viewBox="0 0 10 11" style="left:1410.9px;top:65.3px;"><path d="M0 0.5H9.5L4.75 10.5Z" fill="#262626"/></svg><div class="t" style="left:1426.6px;top:63.9px;font-size:14px;line-height:14px;color:#000;letter-spacing:0.78px">Transform</div><svg width="16" height="9" viewBox="0 0 16 9" style="left:1572.4px;top:68.0px;"><rect x="1" y="1" width="2" height="2" fill="#1e1e1e" opacity="0.6"/><rect x="0" y="0" width="2" height="2" fill="#f0f0f0"/><rect x="1" y="5" width="2" height="2" fill="#1e1e1e" opacity="0.6"/><rect x="0" y="4" width="2" height="2" fill="#f0f0f0"/><rect x="5" y="1" width="2" height="2" fill="#1e1e1e" opacity="0.6"/><rect x="4" y="0" width="2" height="2" fill="#f0f0f0"/><rect x="5" y="5" width="2" height="2" fill="#1e1e1e" opacity="0.6"/><rect x="4" y="4" width="2" height="2" fill="#f0f0f0"/><rect x="9" y="1" width="2" height="2" fill="#1e1e1e" opacity="0.6"/><rect x="8" y="0" width="2" height="2" fill="#f0f0f0"/><rect x="9" y="5" width="2" height="2" fill="#1e1e1e" opacity="0.6"/><rect x="8" y="4" width="2" height="2" fill="#f0f0f0"/><rect x="13" y="1" width="2" height="2" fill="#1e1e1e" opacity="0.6"/><rect x="12" y="0" width="2" height="2" fill="#f0f0f0"/><rect x="13" y="5" width="2" height="2" fill="#1e1e1e" opacity="0.6"/><rect x="12" y="4" width="2" height="2" fill="#f0f0f0"/></svg>
<div class="t" style="left:1415.6px;top:101.9px;font-size:14px;line-height:14px;color:#000;">Location:</div>
<div class="b " style="left:1406.0px;top:121.0px;width:136.6px;height:73.0px;border:1px solid #1c1c1c;border-radius:8px;overflow:hidden;background:#b0b0b0"></div><div class="b " style="left:1407.0px;top:122.0px;width:134.6px;height:23.0px;background:linear-gradient(#a7a7a7,#bcbcbc);border-top-left-radius:7px;border-top-right-radius:7px;"></div><div class="t" style="left:1425.5px;top:126.3px;font-size:14px;line-height:14px;color:#000;">X:</div><div class="t" style="right:398.4px;top:126.3px;font-size:14px;line-height:14px;color:#000;">0m</div><svg width="6" height="8" viewBox="0 0 6 8" style="left:1414px;top:129.0px;"><path d="M5 0V8L0.5 4Z" fill="#8c8c8c"/></svg><svg width="6" height="8" viewBox="0 0 6 8" style="left:1529.6px;top:129.0px;"><path d="M1 0V8L5.5 4Z" fill="#8c8c8c"/></svg><div class="b " style="left:1407.0px;top:145.0px;width:134.6px;height:24.5px;background:linear-gradient(#a7a7a7,#bcbcbc);"></div><div class="b " style="left:1407.0px;top:144.5px;width:134.6px;height:1.0px;background:#2a2a2a;"></div><div class="t" style="left:1425.5px;top:150.6px;font-size:14px;line-height:14px;color:#000;">Y:</div><div class="t" style="right:398.4px;top:150.6px;font-size:14px;line-height:14px;color:#000;">0m</div><svg width="6" height="8" viewBox="0 0 6 8" style="left:1414px;top:153.25px;"><path d="M5 0V8L0.5 4Z" fill="#8c8c8c"/></svg><svg width="6" height="8" viewBox="0 0 6 8" style="left:1529.6px;top:153.25px;"><path d="M1 0V8L5.5 4Z" fill="#8c8c8c"/></svg><div class="b " style="left:1407.0px;top:169.5px;width:134.6px;height:23.5px;background:linear-gradient(#a7a7a7,#bcbcbc);border-bottom-left-radius:7px;border-bottom-right-radius:7px;"></div><div class="b " style="left:1407.0px;top:169.0px;width:134.6px;height:1.0px;background:#2a2a2a;"></div><div class="t" style="left:1425.5px;top:175.1px;font-size:14px;line-height:14px;color:#000;">Z:</div><div class="t" style="right:398.4px;top:175.1px;font-size:14px;line-height:14px;color:#000;">0m</div><svg width="6" height="8" viewBox="0 0 6 8" style="left:1414px;top:177.75px;"><path d="M5 0V8L0.5 4Z" fill="#8c8c8c"/></svg><svg width="6" height="8" viewBox="0 0 6 8" style="left:1529.6px;top:177.75px;"><path d="M1 0V8L5.5 4Z" fill="#8c8c8c"/></svg>
<div class="b " style="left:1553.5px;top:121.0px;width:34.0px;height:73.0px;border:1px solid #1c1c1c;border-radius:5px;background:linear-gradient(#999,#8f8f8f)"></div><div class="b " style="left:1554.5px;top:144.5px;width:32.0px;height:1.0px;background:#2a2a2a;"></div><div class="b " style="left:1554.5px;top:169.0px;width:32.0px;height:1.0px;background:#2a2a2a;"></div><svg width="20" height="18" style="left:1561px;top:124px"><path d="M3.5 7.5V4.5Q3.5 1.5 6.5 1.5Q9.5 1.5 9.5 4.5V5.5" fill="none" stroke="#111" stroke-width="3"/><path d="M3.5 7.5V4.5Q3.5 1.5 6.5 1.5Q9.5 1.5 9.5 4.5V5.5" fill="none" stroke="#fff" stroke-width="1.2"/><rect x="6" y="8" width="12" height="9" fill="#f0f0f0" stroke="#111" stroke-width="1.2"/><rect x="9" y="11.5" width="6" height="1.5" fill="#555"/></svg><svg width="20" height="18" style="left:1561px;top:148px"><path d="M3.5 7.5V4.5Q3.5 1.5 6.5 1.5Q9.5 1.5 9.5 4.5V5.5" fill="none" stroke="#111" stroke-width="3"/><path d="M3.5 7.5V4.5Q3.5 1.5 6.5 1.5Q9.5 1.5 9.5 4.5V5.5" fill="none" stroke="#fff" stroke-width="1.2"/><rect x="6" y="8" width="12" height="9" fill="#f0f0f0" stroke="#111" stroke-width="1.2"/><rect x="9" y="11.5" width="6" height="1.5" fill="#555"/></svg><svg width="20" height="18" style="left:1561px;top:172px"><path d="M3.5 7.5V4.5Q3.5 1.5 6.5 1.5Q9.5 1.5 9.5 4.5V5.5" fill="none" stroke="#111" stroke-width="3"/><path d="M3.5 7.5V4.5Q3.5 1.5 6.5 1.5Q9.5 1.5 9.5 4.5V5.5" fill="none" stroke="#fff" stroke-width="1.2"/><rect x="6" y="8" width="12" height="9" fill="#f0f0f0" stroke="#111" stroke-width="1.2"/><rect x="9" y="11.5" width="6" height="1.5" fill="#555"/></svg>
<div class="t" style="left:1415.6px;top:203.9px;font-size:14px;line-height:14px;color:#000;">Rotation:</div>
<div class="b " style="left:1406.0px;top:222.6px;width:136.6px;height:73.4px;border:1px solid #1c1c1c;border-radius:8px;overflow:hidden;background:#b0b0b0"></div><div class="b " style="left:1407.0px;top:223.6px;width:134.6px;height:23.4px;background:linear-gradient(#a7a7a7,#bcbcbc);border-top-left-radius:7px;border-top-right-radius:7px;"></div><div class="t" style="left:1425.5px;top:228.1px;font-size:14px;line-height:14px;color:#000;">X:</div><div class="t" style="right:398.4px;top:228.1px;font-size:14px;line-height:14px;color:#000;">0°</div><svg width="6" height="8" viewBox="0 0 6 8" style="left:1414px;top:230.8px;"><path d="M5 0V8L0.5 4Z" fill="#8c8c8c"/></svg><svg width="6" height="8" viewBox="0 0 6 8" style="left:1529.6px;top:230.8px;"><path d="M1 0V8L5.5 4Z" fill="#8c8c8c"/></svg><div class="b " style="left:1407.0px;top:247.0px;width:134.6px;height:24.5px;background:linear-gradient(#a7a7a7,#bcbcbc);"></div><div class="b " style="left:1407.0px;top:246.5px;width:134.6px;height:1.0px;background:#2a2a2a;"></div><div class="t" style="left:1425.5px;top:252.6px;font-size:14px;line-height:14px;color:#000;">Y:</div><div class="t" style="right:398.4px;top:252.6px;font-size:14px;line-height:14px;color:#000;">0°</div><svg width="6" height="8" viewBox="0 0 6 8" style="left:1414px;top:255.25px;"><path d="M5 0V8L0.5 4Z" fill="#8c8c8c"/></svg><svg width="6" height="8" viewBox="0 0 6 8" style="left:1529.6px;top:255.25px;"><path d="M1 0V8L5.5 4Z" fill="#8c8c8c"/></svg><div class="b " style="left:1407.0px;top:271.5px;width:134.6px;height:23.5px;background:linear-gradient(#a7a7a7,#bcbcbc);border-bottom-left-radius:7px;border-bottom-right-radius:7px;"></div><div class="b " style="left:1407.0px;top:271.0px;width:134.6px;height:1.0px;background:#2a2a2a;"></div><div class="t" style="left:1425.5px;top:277.1px;font-size:14px;line-height:14px;color:#000;">Z:</div><div class="t" style="right:398.4px;top:277.1px;font-size:14px;line-height:14px;color:#000;">0°</div><svg width="6" height="8" viewBox="0 0 6 8" style="left:1414px;top:279.75px;"><path d="M5 0V8L0.5 4Z" fill="#8c8c8c"/></svg><svg width="6" height="8" viewBox="0 0 6 8" style="left:1529.6px;top:279.75px;"><path d="M1 0V8L5.5 4Z" fill="#8c8c8c"/></svg>
<div class="b " style="left:1553.5px;top:222.6px;width:34.0px;height:73.4px;border:1px solid #1c1c1c;border-radius:5px;background:linear-gradient(#999,#8f8f8f)"></div><div class="b " style="left:1554.5px;top:246.5px;width:32.0px;height:1.0px;background:#2a2a2a;"></div><div class="b " style="left:1554.5px;top:271.0px;width:32.0px;height:1.0px;background:#2a2a2a;"></div><svg width="20" height="18" style="left:1561px;top:225px"><path d="M3.5 7.5V4.5Q3.5 1.5 6.5 1.5Q9.5 1.5 9.5 4.5V5.5" fill="none" stroke="#111" stroke-width="3"/><path d="M3.5 7.5V4.5Q3.5 1.5 6.5 1.5Q9.5 1.5 9.5 4.5V5.5" fill="none" stroke="#fff" stroke-width="1.2"/><rect x="6" y="8" width="12" height="9" fill="#f0f0f0" stroke="#111" stroke-width="1.2"/><rect x="9" y="11.5" width="6" height="1.5" fill="#555"/></svg><svg width="20" height="18" style="left:1561px;top:250px"><path d="M3.5 7.5V4.5Q3.5 1.5 6.5 1.5Q9.5 1.5 9.5 4.5V5.5" fill="none" stroke="#111" stroke-width="3"/><path d="M3.5 7.5V4.5Q3.5 1.5 6.5 1.5Q9.5 1.5 9.5 4.5V5.5" fill="none" stroke="#fff" stroke-width="1.2"/><rect x="6" y="8" width="12" height="9" fill="#f0f0f0" stroke="#111" stroke-width="1.2"/><rect x="9" y="11.5" width="6" height="1.5" fill="#555"/></svg><svg width="20" height="18" style="left:1561px;top:274px"><path d="M3.5 7.5V4.5Q3.5 1.5 6.5 1.5Q9.5 1.5 9.5 4.5V5.5" fill="none" stroke="#111" stroke-width="3"/><path d="M3.5 7.5V4.5Q3.5 1.5 6.5 1.5Q9.5 1.5 9.5 4.5V5.5" fill="none" stroke="#fff" stroke-width="1.2"/><rect x="6" y="8" width="12" height="9" fill="#f0f0f0" stroke="#111" stroke-width="1.2"/><rect x="9" y="11.5" width="6" height="1.5" fill="#555"/></svg>
<div class="b menu" style="left:1406.0px;top:299.6px;width:181.5px;height:24.0px;"></div><div class="t" style="left:1415.0px;top:304.9px;font-size:14px;line-height:14px;color:#fff;">XYZ Euler</div><svg width="8" height="16" style="left:1575.5px;top:303.6px"><path d="M0.5 6.5L4 1L7.5 6.5Z M0.5 9.5L4 15L7.5 9.5Z" fill="#bdbdbd"/></svg>
<div class="t" style="left:1415.6px;top:333.1px;font-size:14px;line-height:14px;color:#000;">Scale:</div>
<div class="b " style="left:1406.0px;top:352.0px;width:136.6px;height:73.0px;border:1px solid #1c1c1c;border-radius:8px;overflow:hidden;background:#b0b0b0"></div><div class="b " style="left:1407.0px;top:353.0px;width:134.6px;height:23.5px;background:linear-gradient(#a7a7a7,#bcbcbc);border-top-left-radius:7px;border-top-right-radius:7px;"></div><div class="t" style="left:1425.5px;top:357.6px;font-size:14px;line-height:14px;color:#000;">X:</div><div class="t" style="right:398.4px;top:357.6px;font-size:14px;line-height:14px;color:#000;">1.000</div><svg width="6" height="8" viewBox="0 0 6 8" style="left:1414px;top:360.25px;"><path d="M5 0V8L0.5 4Z" fill="#8c8c8c"/></svg><svg width="6" height="8" viewBox="0 0 6 8" style="left:1529.6px;top:360.25px;"><path d="M1 0V8L5.5 4Z" fill="#8c8c8c"/></svg><div class="b " style="left:1407.0px;top:376.5px;width:134.6px;height:24.5px;background:linear-gradient(#a7a7a7,#bcbcbc);"></div><div class="b " style="left:1407.0px;top:376.0px;width:134.6px;height:1.0px;background:#2a2a2a;"></div><div class="t" style="left:1425.5px;top:382.1px;font-size:14px;line-height:14px;color:#000;">Y:</div><div class="t" style="right:398.4px;top:382.1px;font-size:14px;line-height:14px;color:#000;">1.000</div><svg width="6" height="8" viewBox="0 0 6 8" style="left:1414px;top:384.75px;"><path d="M5 0V8L0.5 4Z" fill="#8c8c8c"/></svg><svg width="6" height="8" viewBox="0 0 6 8" style="left:1529.6px;top:384.75px;"><path d="M1 0V8L5.5 4Z" fill="#8c8c8c"/></svg><div class="b " style="left:1407.0px;top:401.0px;width:134.6px;height:23.0px;background:linear-gradient(#a7a7a7,#bcbcbc);border-bottom-left-radius:7px;border-bottom-right-radius:7px;"></div><div class="b " style="left:1407.0px;top:400.5px;width:134.6px;height:1.0px;background:#2a2a2a;"></div><div class="t" style="left:1425.5px;top:406.3px;font-size:14px;line-height:14px;color:#000;">Z:</div><div class="t" style="right:398.4px;top:406.3px;font-size:14px;line-height:14px;color:#000;">1.000</div><svg width="6" height="8" viewBox="0 0 6 8" style="left:1414px;top:409.0px;"><path d="M5 0V8L0.5 4Z" fill="#8c8c8c"/></svg><svg width="6" height="8" viewBox="0 0 6 8" style="left:1529.6px;top:409.0px;"><path d="M1 0V8L5.5 4Z" fill="#8c8c8c"/></svg>
<div class="b " style="left:1553.5px;top:352.0px;width:34.0px;height:73.0px;border:1px solid #1c1c1c;border-radius:5px;background:linear-gradient(#999,#8f8f8f)"></div><div class="b " style="left:1554.5px;top:376.0px;width:32.0px;height:1.0px;background:#2a2a2a;"></div><div class="b " style="left:1554.5px;top:400.5px;width:32.0px;height:1.0px;background:#2a2a2a;"></div><svg width="20" height="18" style="left:1561px;top:355px"><path d="M3.5 7.5V4.5Q3.5 1.5 6.5 1.5Q9.5 1.5 9.5 4.5V5.5" fill="none" stroke="#111" stroke-width="3"/><path d="M3.5 7.5V4.5Q3.5 1.5 6.5 1.5Q9.5 1.5 9.5 4.5V5.5" fill="none" stroke="#fff" stroke-width="1.2"/><rect x="6" y="8" width="12" height="9" fill="#f0f0f0" stroke="#111" stroke-width="1.2"/><rect x="9" y="11.5" width="6" height="1.5" fill="#555"/></svg><svg width="20" height="18" style="left:1561px;top:379px"><path d="M3.5 7.5V4.5Q3.5 1.5 6.5 1.5Q9.5 1.5 9.5 4.5V5.5" fill="none" stroke="#111" stroke-width="3"/><path d="M3.5 7.5V4.5Q3.5 1.5 6.5 1.5Q9.5 1.5 9.5 4.5V5.5" fill="none" stroke="#fff" stroke-width="1.2"/><rect x="6" y="8" width="12" height="9" fill="#f0f0f0" stroke="#111" stroke-width="1.2"/><rect x="9" y="11.5" width="6" height="1.5" fill="#555"/></svg><svg width="20" height="18" style="left:1561px;top:404px"><path d="M3.5 7.5V4.5Q3.5 1.5 6.5 1.5Q9.5 1.5 9.5 4.5V5.5" fill="none" stroke="#111" stroke-width="3"/><path d="M3.5 7.5V4.5Q3.5 1.5 6.5 1.5Q9.5 1.5 9.5 4.5V5.5" fill="none" stroke="#fff" stroke-width="1.2"/><rect x="6" y="8" width="12" height="9" fill="#f0f0f0" stroke="#111" stroke-width="1.2"/><rect x="9" y="11.5" width="6" height="1.5" fill="#555"/></svg>
<div class="t" style="left:1415.6px;top:435.1px;font-size:14px;line-height:14px;color:#000;">Dimensions:</div>
<div class="b " style="left:1406.0px;top:454.0px;width:181.5px;height:73.0px;border:1px solid #1c1c1c;border-radius:8px;overflow:hidden;background:#b0b0b0"></div><div class="b " style="left:1407.0px;top:455.0px;width:179.5px;height:23.5px;background:linear-gradient(#a7a7a7,#bcbcbc);border-top-left-radius:7px;border-top-right-radius:7px;"></div><div class="t" style="left:1425.5px;top:459.6px;font-size:14px;line-height:14px;color:#000;">X:</div><div class="t" style="right:353.5px;top:459.6px;font-size:14px;line-height:14px;color:#000;">1km</div><svg width="6" height="8" viewBox="0 0 6 8" style="left:1414px;top:462.25px;"><path d="M5 0V8L0.5 4Z" fill="#8c8c8c"/></svg><svg width="6" height="8" viewBox="0 0 6 8" style="left:1574.5px;top:462.25px;"><path d="M1 0V8L5.5 4Z" fill="#8c8c8c"/></svg><div class="b " style="left:1407.0px;top:478.5px;width:179.5px;height:24.5px;background:linear-gradient(#a7a7a7,#bcbcbc);"></div><div class="b " style="left:1407.0px;top:478.0px;width:179.5px;height:1.0px;background:#2a2a2a;"></div><div class="t" style="left:1425.5px;top:484.1px;font-size:14px;line-height:14px;color:#000;">Y:</div><div class="t" style="right:353.5px;top:484.1px;font-size:14px;line-height:14px;color:#000;">26.5m</div><svg width="6" height="8" viewBox="0 0 6 8" style="left:1414px;top:486.75px;"><path d="M5 0V8L0.5 4Z" fill="#8c8c8c"/></svg><svg width="6" height="8" viewBox="0 0 6 8" style="left:1574.5px;top:486.75px;"><path d="M1 0V8L5.5 4Z" fill="#8c8c8c"/></svg><div class="b " style="left:1407.0px;top:503.0px;width:179.5px;height:23.0px;background:linear-gradient(#a7a7a7,#bcbcbc);border-bottom-left-radius:7px;border-bottom-right-radius:7px;"></div><div class="b " style="left:1407.0px;top:502.5px;width:179.5px;height:1.0px;background:#2a2a2a;"></div><div class="t" style="left:1425.5px;top:508.3px;font-size:14px;line-height:14px;color:#000;">Z:</div><div class="t" style="right:353.5px;top:508.3px;font-size:14px;line-height:14px;color:#000;">110m</div><svg width="6" height="8" viewBox="0 0 6 8" style="left:1414px;top:511.0px;"><path d="M5 0V8L0.5 4Z" fill="#8c8c8c"/></svg><svg width="6" height="8" viewBox="0 0 6 8" style="left:1574.5px;top:511.0px;"><path d="M1 0V8L5.5 4Z" fill="#8c8c8c"/></svg>
<div class="b " style="left:1400.0px;top:537.5px;width:196.0px;height:1.0px;background:#606060;"></div><div class="b " style="left:1400.0px;top:538.5px;width:196.0px;height:1.0px;background:#858585;"></div>
<svg width="10" height="11" viewBox="0 0 10 11" style="left:1410.9px;top:547px;"><path d="M0 0.5H9.5L4.75 10.5Z" fill="#262626"/></svg>
<div class="b " style="left:1427.0px;top:544.0px;width:17.0px;height:17.0px;background:linear-gradient(#4a4a4a,#3c3c3c);border:1px solid #1a1a1a;border-radius:4px"></div><svg width="17" height="17" viewBox="0 0 17 17" style="left:1427px;top:544px;"><path d="M3.5 8L7 11.5L13 3" fill="none" stroke="#111" stroke-width="3.6"/><path d="M3.5 8L7 11.5L13 3" fill="none" stroke="#f4f4f4" stroke-width="1.8"/></svg>
<div class="t" style="left:1451.0px;top:545.7px;font-size:14px;line-height:14px;color:#000;letter-spacing:0.5px">Grease Pencil Layer</div>
<svg width="16" height="9" viewBox="0 0 16 9" style="left:1572.4px;top:549px;"><rect x="0" y="0" width="2" height="2" fill="#f0f0f0"/><rect x="0" y="4" width="2" height="2" fill="#f0f0f0"/><rect x="4" y="0" width="2" height="2" fill="#f0f0f0"/><rect x="4" y="4" width="2" height="2" fill="#f0f0f0"/><rect x="8" y="0" width="2" height="2" fill="#f0f0f0"/><rect x="8" y="4" width="2" height="2" fill="#f0f0f0"/><rect x="12" y="0" width="2" height="2" fill="#f0f0f0"/><rect x="12" y="4" width="2" height="2" fill="#f0f0f0"/></svg>
<div class="b " style="left:1406.0px;top:577.3px;width:181.5px;height:24.1px;border:1px solid #1c1c1c;border-radius:5px;overflow:hidden;background:linear-gradient(#505050,#3c3c3c)"></div>
<div class="b " style="left:1407.0px;top:578.3px;width:89.4px;height:22.1px;background:linear-gradient(#6a92d2,#4f78ba);border-radius:4px 0 0 4px"></div>
<div class="t" style="left:1251.0px;width:400px;text-align:center;top:582.7px;font-size:14px;line-height:14px;color:#000;">Scene</div>
<div class="t" style="left:1341.0px;width:400px;text-align:center;top:582.7px;font-size:14px;line-height:14px;color:#fff;">Object</div>
<div class="b " style="left:1406.0px;top:608.8px;width:181.5px;height:23.8px;border:1px solid #1c1c1c;border-radius:5px;overflow:hidden;background:linear-gradient(#a9a9a9,#979797)"></div>
<div class="b " style="left:1407.0px;top:609.8px;width:38.7px;height:21.8px;background:linear-gradient(#505050,#3c3c3c);border-radius:4px 0 0 4px"></div>
<svg width="20" height="18" viewBox="0 0 20 18" style="left:1411px;top:612px;"><path d="M2 16L5 12L15 2L18 5L8 15Z" fill="#7ab33a" stroke="#222" stroke-width="1"/><path d="M15 2L18 5L17 6L14 3Z" fill="#e04040"/><path d="M2 16L5 12L8 15Z" fill="#f0d0a0"/></svg>
<svg width="8" height="16" style="left:1433px;top:612.5px"><path d="M0.5 6.5L4 1L7.5 6.5Z M0.5 9.5L4 15L7.5 9.5Z" fill="#bdbdbd"/></svg>
<svg width="16" height="16" style="left:1452px;top:613px"><path d="M8.0 1V15M1 8.0H15" stroke="#111" stroke-width="5"/><path d="M8.0 2V14M2 8.0H14" stroke="#fff" stroke-width="2.6"/></svg>
<div class="t" style="left:1325.0px;width:400px;text-align:center;top:614.1px;font-size:14px;line-height:14px;color:#000;">New</div>
<div class="b " style="left:1406.0px;top:639.8px;width:181.5px;height:23.6px;border:1px solid #1c1c1c;border-radius:5px;background:linear-gradient(#a9a9a9,#979797)"></div><div class="t" style="left:1296.8px;width:400px;text-align:center;top:644.9px;font-size:14px;line-height:14px;color:#000;">New Layer</div>
<div class="b " style="left:1400.0px;top:674.0px;width:196.0px;height:1.0px;background:#606060;"></div><div class="b " style="left:1400.0px;top:675.0px;width:196.0px;height:1.0px;background:#858585;"></div>
<svg width="10" height="11" viewBox="0 0 10 11" style="left:1410.9px;top:682.9px;"><path d="M0 0.5H9.5L4.75 10.5Z" fill="#262626"/></svg><div class="t" style="left:1426.6px;top:681.5px;font-size:14px;line-height:14px;color:#000;letter-spacing:0.5px">View</div><svg width="16" height="9" viewBox="0 0 16 9" style="left:1572.4px;top:685.6px;"><rect x="1" y="1" width="2" height="2" fill="#1e1e1e" opacity="0.6"/><rect x="0" y="0" width="2" height="2" fill="#f0f0f0"/><rect x="1" y="5" width="2" height="2" fill="#1e1e1e" opacity="0.6"/><rect x="0" y="4" width="2" height="2" fill="#f0f0f0"/><rect x="5" y="1" width="2" height="2" fill="#1e1e1e" opacity="0.6"/><rect x="4" y="0" width="2" height="2" fill="#f0f0f0"/><rect x="5" y="5" width="2" height="2" fill="#1e1e1e" opacity="0.6"/><rect x="4" y="4" width="2" height="2" fill="#f0f0f0"/><rect x="9" y="1" width="2" height="2" fill="#1e1e1e" opacity="0.6"/><rect x="8" y="0" width="2" height="2" fill="#f0f0f0"/><rect x="9" y="5" width="2" height="2" fill="#1e1e1e" opacity="0.6"/><rect x="8" y="4" width="2" height="2" fill="#f0f0f0"/><rect x="13" y="1" width="2" height="2" fill="#1e1e1e" opacity="0.6"/><rect x="12" y="0" width="2" height="2" fill="#f0f0f0"/><rect x="13" y="5" width="2" height="2" fill="#1e1e1e" opacity="0.6"/><rect x="12" y="4" width="2" height="2" fill="#f0f0f0"/></svg>
<div class="b " style="left:1406.0px;top:713.8px;width:181.5px;height:23.2px;border:1px solid #1c1c1c;border-radius:11px;overflow:hidden;background:#b0b0b0"></div><div class="b " style="left:1407.0px;top:714.8px;width:179.5px;height:21.2px;background:linear-gradient(#a7a7a7,#bcbcbc);border-top-left-radius:10px;border-top-right-radius:10px;border-bottom-left-radius:10px;border-bottom-right-radius:10px;"></div><div class="t" style="left:1425.5px;top:718.7px;font-size:14px;line-height:14px;color:#000;">Lens:</div><div class="t" style="right:353.5px;top:718.7px;font-size:14px;line-height:14px;color:#000;">120mm</div><svg width="6" height="8" viewBox="0 0 6 8" style="left:1414px;top:721.4px;"><path d="M5 0V8L0.5 4Z" fill="#8c8c8c"/></svg><svg width="6" height="8" viewBox="0 0 6 8" style="left:1574.5px;top:721.4px;"><path d="M1 0V8L5.5 4Z" fill="#8c8c8c"/></svg>
<div class="t" style="left:1415.6px;top:746.1px;font-size:14px;line-height:14px;color:#000;">Lock to Object:</div>
<div class="b " style="left:1406.0px;top:768.0px;width:181.5px;height:23.0px;border:1px solid #1c1c1c;border-radius:5px;background:linear-gradient(#a5a5a5,#b9b9b9)"></div>
<svg width="17" height="17" viewBox="0 0 16 16" style="left:1413px;top:771px;opacity:1.0"><path d="M8 1L14.5 4.5V11.5L8 15L1.5 11.5V4.5Z" fill="#c7782e" stroke="#222" stroke-width="1"/><path d="M8 1L14.5 4.5L8 8L1.5 4.5Z" fill="#f4c07a"/><path d="M8 8L14.5 4.5V11.5L8 15Z" fill="#d98a3a"/></svg>
<svg width="16" height="16" style="left:1569px;top:771px"><path d="M2 14L9 7" stroke="#eee" stroke-width="3"/><path d="M2 14L9 7" stroke="#111" stroke-width="1.2"/><path d="M9 4L12 1.5Q14.5 1.5 14.5 4L12 7L13 8L11.5 9.5L6.5 4.5L8 3Z" fill="#111"/></svg>
<div class="b " style="left:1410.0px;top:799.0px;width:16.0px;height:16.0px;background:linear-gradient(#4a4a4a,#3c3c3c);border:1px solid #1a1a1a;border-radius:4px"></div>
<div class="t" style="left:1437.4px;top:801.1px;font-size:14px;line-height:14px;color:#000;letter-spacing:0.15px">Lock to Cursor</div>
<div class="b " style="left:1410.0px;top:829.0px;width:16.0px;height:16.0px;background:linear-gradient(#4a4a4a,#3c3c3c);border:1px solid #1a1a1a;border-radius:4px"></div>
<div class="t" style="left:1437.4px;top:832.1px;font-size:14px;line-height:14px;color:#000;letter-spacing:0.15px">Lock Camera to View</div>
<div class="t" style="left:1415.6px;top:863.1px;font-size:14px;line-height:14px;color:#000;">Clip:</div>
<div class="b " style="left:1406.0px;top:882.0px;width:181.5px;height:48.0px;border:1px solid #1c1c1c;border-radius:8px;overflow:hidden;background:#b0b0b0"></div><div class="b " style="left:1407.0px;top:883.0px;width:179.5px;height:22.3px;background:linear-gradient(#a7a7a7,#bcbcbc);border-top-left-radius:7px;border-top-right-radius:7px;"></div><div class="t" style="left:1425.5px;top:887.0px;font-size:14px;line-height:14px;color:#000;">Start:</div><div class="t" style="right:353.5px;top:887.0px;font-size:14px;line-height:14px;color:#000;">1m</div><svg width="6" height="8" viewBox="0 0 6 8" style="left:1414px;top:889.65px;"><path d="M5 0V8L0.5 4Z" fill="#8c8c8c"/></svg><svg width="6" height="8" viewBox="0 0 6 8" style="left:1574.5px;top:889.65px;"><path d="M1 0V8L5.5 4Z" fill="#8c8c8c"/></svg><div class="b " style="left:1407.0px;top:905.3px;width:179.5px;height:23.7px;background:linear-gradient(#a7a7a7,#bcbcbc);border-bottom-left-radius:7px;border-bottom-right-radius:7px;"></div><div class="b " style="left:1407.0px;top:904.8px;width:179.5px;height:1.0px;background:#2a2a2a;"></div><div class="t" style="left:1425.5px;top:911.0px;font-size:14px;line-height:14px;color:#000;">End:</div><div class="t" style="right:353.5px;top:911.0px;font-size:14px;line-height:14px;color:#000;">100km</div><svg width="6" height="8" viewBox="0 0 6 8" style="left:1414px;top:913.65px;"><path d="M5 0V8L0.5 4Z" fill="#8c8c8c"/></svg><svg width="6" height="8" viewBox="0 0 6 8" style="left:1574.5px;top:913.65px;"><path d="M1 0V8L5.5 4Z" fill="#8c8c8c"/></svg>
<div class="t" style="left:1415.6px;top:937.7px;font-size:14px;line-height:14px;color:#4a4a4a;">Local Camera:</div>
<div class="b " style="left:1406.0px;top:957.0px;width:181.5px;height:23.0px;border:1px solid #3a3a3a;border-radius:5px;background:linear-gradient(#8f8f8f,#9d9d9d)"></div>
<svg width="17" height="17" viewBox="0 0 16 16" style="left:1413px;top:960px;opacity:0.55"><path d="M8 1L14.5 4.5V11.5L8 15L1.5 11.5V4.5Z" fill="#c7782e" stroke="#222" stroke-width="1"/><path d="M8 1L14.5 4.5L8 8L1.5 4.5Z" fill="#f4c07a"/><path d="M8 8L14.5 4.5V11.5L8 15Z" fill="#d98a3a"/></svg>
<svg width="16" height="16" style="left:1569px;top:960px"><path d="M2 14L9 7" stroke="#eee" stroke-width="3"/><path d="M2 14L9 7" stroke="#444" stroke-width="1.2"/><path d="M9 4L12 1.5Q14.5 1.5 14.5 4L12 7L13 8L11.5 9.5L6.5 4.5L8 3Z" fill="#444"/></svg>
<div class="b " style="left:1410.0px;top:991.0px;width:16.0px;height:16.0px;background:linear-gradient(#4a4a4a,#3c3c3c);border:1px solid #1a1a1a;border-radius:4px"></div>
<div class="t" style="left:1437.4px;top:993.1px;font-size:14px;line-height:14px;color:#000;letter-spacing:0.15px">Render Border</div>
<div class="b " style="left:1621.0px;top:56.0px;width:299.0px;height:360.0px;background:#727272;"></div>
<div class="b " style="left:1621.0px;top:56.0px;width:299.0px;height:32.0px;background:#727272;"></div>
<div class="b menu" style="left:1632.0px;top:60.0px;width:40.0px;height:25.0px;"></div>
<svg width="22" height="20" viewBox="0 0 22 20" style="left:1637px;top:63px;"><rect x="1" y="1" width="9" height="3" fill="#f0c060" stroke="#222" stroke-width="0.8"/><path d="M4 4V17M4 10H9M4 16H9" stroke="#ddd" stroke-width="1"/><rect x="9" y="8.5" width="9" height="3" fill="#eee" stroke="#222" stroke-width="0.8"/><rect x="9" y="14.5" width="9" height="3" fill="#eee" stroke="#222" stroke-width="0.8"/></svg>
<svg width="8" height="16" style="left:1660px;top:64.5px"><path d="M0.5 6.5L4 1L7.5 6.5Z M0.5 9.5L4 15L7.5 9.5Z" fill="#bdbdbd"/></svg>
<div class="t" style="left:1687.0px;top:66.9px;font-size:14px;line-height:14px;color:#000;">View</div>
<div class="t" style="left:1743.5px;top:66.9px;font-size:14px;line-height:14px;color:#000;">Search</div>
<div class="b " style="left:1803.6px;top:60.0px;width:126.4px;height:25.0px;background:linear-gradient(#535353,#3b3b3b);border:1px solid #1a1a1a;border-radius:5px"></div>
<div class="t" style="left:1813.0px;top:66.9px;font-size:14px;line-height:14px;color:#fff;letter-spacing:0.3px">All Scenes</div>
<svg width="18" height="18" viewBox="0 0 18 18" style="left:1902px;top:56px;overflow:hidden"><path d="M2 0L18 16M7 0L18 11M12 0L18 6" stroke="#1a1a1a" stroke-width="1.1"/><path d="M3 0L18 15M8 0L18 10M13 0L18 5" stroke="#a8a8a8" stroke-width="0.7"/></svg>
<div class="b " style="left:1621.0px;top:88.4px;width:299.0px;height:24.6px;background:#727272;"></div>
<div class="b " style="left:1621.0px;top:113.0px;width:299.0px;height:25.0px;background:#777777;"></div>
<div class="b " style="left:1621.0px;top:138.0px;width:299.0px;height:25.0px;background:#727272;"></div>
<div class="b " style="left:1621.0px;top:163.0px;width:299.0px;height:25.0px;background:#777777;"></div>
<div class="b " style="left:1621.0px;top:188.0px;width:299.0px;height:25.0px;background:#727272;"></div>
<div class="b " style="left:1621.0px;top:213.0px;width:299.0px;height:25.0px;background:#777777;"></div>
<div class="b " style="left:1621.0px;top:238.0px;width:299.0px;height:25.0px;background:#727272;"></div>
<div class="b " style="left:1621.0px;top:263.0px;width:299.0px;height:25.0px;background:#777777;"></div>
<div class="b " style="left:1621.0px;top:288.0px;width:299.0px;height:25.0px;background:#727272;"></div>
<div class="b " style="left:1621.0px;top:313.0px;width:299.0px;height:25.0px;background:#777777;"></div>
<div class="b " style="left:1621.0px;top:338.0px;width:299.0px;height:25.0px;background:#727272;"></div>
<div class="b " style="left:1621.0px;top:363.0px;width:299.0px;height:25.0px;background:#777777;"></div>
<div class="b " style="left:1621.0px;top:88.4px;width:224.0px;height:24.6px;background:#8b8f93;"></div>
<div class="b " style="left:1845.0px;top:88.0px;width:1.0px;height:306.0px;background:#616161;"></div>
<div class="b " style="left:1870.7px;top:88.0px;width:1.0px;height:306.0px;background:#616161;"></div>
<div class="b " style="left:1896.6px;top:88.0px;width:1.0px;height:306.0px;background:#616161;"></div>
<svg width="100" height="110" viewBox="0 0 100 110" style="left:1621px;top:88px;"><path d="M12.5 14H28M38.5 26V90M38.5 89H52" stroke="#111" stroke-width="1" fill="none"/></svg>
<svg width="13" height="13" viewBox="0 0 13 13" style="left:1627.5px;top:96px;"><circle cx="6.5" cy="6.5" r="5.3" fill="#eee" stroke="#111" stroke-width="1.4"/><path d="M3.5 6.5H9.5" stroke="#111" stroke-width="1.8"/></svg>
<svg width="13" height="13" viewBox="0 0 13 13" style="left:1653.5px;top:121px;"><circle cx="6.5" cy="6.5" r="5.3" fill="#eee" stroke="#111" stroke-width="1.4"/><path d="M3.5 6.5H9.5M6.5 3.5V9.5" stroke="#111" stroke-width="1.8"/></svg>
<svg width="13" height="13" viewBox="0 0 13 13" style="left:1653.5px;top:171px;"><circle cx="6.5" cy="6.5" r="5.3" fill="#eee" stroke="#111" stroke-width="1.4"/><path d="M3.5 6.5H9.5M6.5 3.5V9.5" stroke="#111" stroke-width="1.8"/></svg>
<svg width="22" height="22" viewBox="0 0 22 22" style="left:1650px;top:91px;"><circle cx="11" cy="11" r="10.5" fill="#a0a4a8" opacity="0.6"/><circle cx="6" cy="5" r="2.5" fill="#e8e870"/><rect x="10" y="3" width="7" height="13" rx="3" fill="#5b84cc" stroke="#1a2550" stroke-width="1"/><circle cx="8" cy="16" r="4.3" fill="#ddd" stroke="#111" stroke-width="1"/></svg>
<div class="t" style="left:1674.8px;top:95.4px;font-size:14px;line-height:14px;color:#000;">Scene</div>
<svg width="20" height="20" viewBox="0 0 20 20" style="left:1675px;top:116px;"><rect x="4" y="5" width="13" height="13" fill="#e0e0d8" stroke="#222"/><rect x="1" y="1" width="13" height="13" fill="#c8d4e0" stroke="#222"/><path d="M6 10L9 4L11 9" fill="#4466cc" stroke="#224" stroke-width="0.8"/></svg>
<div class="t" style="left:1699.8px;top:120.8px;font-size:14px;line-height:14px;color:#000;">RenderLayers</div>
<div class="b " style="left:1801.0px;top:120.0px;width:3.0px;height:13.0px;background:#444;"></div>
<svg width="22" height="20" viewBox="0 0 22 20" style="left:1814px;top:116px;"><circle cx="11" cy="10" r="10" fill="#a4a4a4" opacity="0.6"/><rect x="6" y="5" width="12" height="12" fill="#e0e0d8" stroke="#222"/><rect x="3" y="2" width="12" height="12" fill="#c8d4e0" stroke="#222"/></svg>
<svg width="22" height="22" viewBox="0 0 22 22" style="left:1673px;top:141px;"><circle cx="11" cy="11" r="10.5" fill="#9aa0b0" opacity="0.7"/><circle cx="11" cy="11" r="8" fill="#3b6fb0" stroke="#112" stroke-width="1"/><path d="M5 9Q8 5 11 7Q13 10 10 12Q7 15 5 12Z M12 13Q15 12 17 15Q14 18 12 16Z" fill="#4a9a50"/><circle cx="9" cy="7" r="2" fill="#cde" opacity="0.6"/></svg>
<div class="t" style="left:1699.8px;top:145.7px;font-size:14px;line-height:14px;color:#000;">World</div>
<svg width="22" height="22" viewBox="0 0 22 22" style="left:1673px;top:166px;"><circle cx="11" cy="11" r="10.5" fill="#b87a3a" opacity="0.8"/><path d="M4 5H18L11 18Z" fill="none" stroke="#111" stroke-width="3"/><path d="M4 5H18L11 18Z" fill="none" stroke="#f4b060" stroke-width="1.5"/></svg>
<div class="t" style="left:1699.8px;top:170.7px;font-size:14px;line-height:14px;color:#fff;">suspension_bridge</div>
<div class="b " style="left:1830.5px;top:170.0px;width:3.0px;height:14.0px;background:#444;"></div>
<svg width="19" height="12" viewBox="0 0 19 12" style="left:1849px;top:170px;"><path d="M1 6Q9 -2 18 6Q9 14 1 6Z" fill="#f4f4f4" stroke="#111" stroke-width="1"/><circle cx="9.5" cy="6" r="2.6" fill="#111"/></svg>
<svg width="12" height="16" viewBox="0 0 12 16" style="left:1877px;top:167px;"><path d="M1 1L1 13L4 10L7 15L9 14L6 9L10 9Z" fill="#f4f4f4" stroke="#111" stroke-width="1"/></svg>
<svg width="19" height="15" viewBox="0 0 19 15" style="left:1899px;top:169px;"><rect x="1" y="3" width="16" height="11" fill="#ddd" stroke="#111"/><circle cx="9" cy="8.5" r="3.3" fill="#333" stroke="#eee"/><rect x="3" y="1" width="5" height="2" fill="#111"/></svg>
<div class="b " style="left:1626.0px;top:394.0px;width:287.5px;height:15.7px;background:#616161;border:1px solid #4c4c4c;border-radius:8px"></div>
<div class="b " style="left:1626.0px;top:394.0px;width:245.0px;height:15.7px;background:linear-gradient(#9c9c9c,#8a8a8a);border:1px solid #3a3a3a;border-radius:8px"></div>
<svg width="14" height="18" viewBox="0 0 14 18" style="left:1621px;top:398px;"><path d="M0 4L12 16M0 9L7 16M0 13L3 16" stroke="#1a1a1a" stroke-width="1.2"/><path d="M0 5L11 16M0 10L6 16" stroke="#a0a0a0" stroke-width="0.8"/></svg>
<div class="b " style="left:1621.0px;top:415.5px;width:299.0px;height:1.0px;background:#0c0c0c;"></div>
<div class="b " style="left:1621.0px;top:416.5px;width:299.0px;height:624.5px;background:#727272;"></div>
<div class="b " style="left:1621.0px;top:416.5px;width:299.0px;height:32.5px;background:#727272;"></div>
<div class="b menu" style="left:1632.0px;top:420.0px;width:39.6px;height:24.0px;"></div>
<svg width="22" height="18" viewBox="0 0 22 18" style="left:1636px;top:423px;"><rect x="2" y="2" width="15" height="5" rx="2.5" fill="#eee" stroke="#111"/><rect x="11" y="2.5" width="5" height="4" fill="#666"/><rect x="2" y="10" width="15" height="5" rx="2.5" fill="#eee" stroke="#111"/><path d="M4 12.5h11" stroke="#888"/></svg>
<svg width="8" height="16" style="left:1659px;top:424px"><path d="M0.5 6.5L4 1L7.5 6.5Z M0.5 9.5L4 15L7.5 9.5Z" fill="#bdbdbd"/></svg>
<div class="b " style="left:1682.0px;top:420.0px;width:258.0px;height:24.0px;background:linear-gradient(#505050,#3c3c3c);border:1px solid #1a1a1a;border-radius:5px"></div>
<div class="b " style="left:1706.5px;top:421.0px;width:1.0px;height:22.0px;background:#222;"></div>
<div class="b " style="left:1731.7px;top:421.0px;width:1.0px;height:22.0px;background:#222;"></div>
<div class="b " style="left:1756.4px;top:421.0px;width:1.0px;height:22.0px;background:#222;"></div>
<div class="b " style="left:1781.4px;top:421.0px;width:1.0px;height:22.0px;background:#222;"></div>
<div class="b " style="left:1806.4px;top:421.0px;width:1.0px;height:22.0px;background:#222;"></div>
<div class="b " style="left:1831.4px;top:421.0px;width:1.0px;height:22.0px;background:#222;"></div>
<div class="b " style="left:1856.6px;top:421.0px;width:1.0px;height:22.0px;background:#222;"></div>
<div class="b " style="left:1881.4px;top:421.0px;width:1.0px;height:22.0px;background:#222;"></div>
<div class="b " style="left:1906.3px;top:421.0px;width:1.0px;height:22.0px;background:#222;"></div>
<div class="b " style="left:1882.0px;top:421.0px;width:24.0px;height:22.0px;background:#5680c2;"></div>
<svg width="22" height="22" viewBox="0 0 22 22" style="left:1683.5px;top:421px;"><rect x="3" y="6" width="16" height="11" fill="#555" stroke="#aaa"/><circle cx="11" cy="11.5" r="3.5" fill="#333" stroke="#ccc"/><rect x="5" y="4" width="5" height="2" fill="#aaa"/></svg>
<svg width="22" height="22" viewBox="0 0 22 22" style="left:1708.0px;top:421px;"><rect x="6" y="6" width="12" height="12" fill="#bbb" stroke="#222"/><rect x="3" y="3" width="12" height="12" fill="#a8b4c4" stroke="#222"/><path d="M7 11L10 5L12 10" fill="#46c" /></svg>
<svg width="22" height="22" viewBox="0 0 22 22" style="left:1733.2px;top:421px;"><circle cx="5" cy="5" r="3" fill="#dde070" opacity="0.6"/><rect x="11" y="4" width="6" height="11" rx="3" fill="#5a7fc0"/><circle cx="8.5" cy="15" r="4" fill="#bbb" stroke="#222"/></svg>
<svg width="22" height="22" viewBox="0 0 22 22" style="left:1757.9px;top:421px;"><circle cx="11" cy="11" r="8" fill="#4a78a8" stroke="#223"/><path d="M6 9Q9 5 12 8Q13 11 9 13Z" fill="#5a9a60"/></svg>
<svg width="22" height="22" viewBox="0 0 22 22" style="left:1782.9px;top:421px;"><path d="M11 3L18 6.5V15L11 19L4 15V6.5Z" fill="#c07a3a" stroke="#222"/><path d="M11 3L18 6.5L11 10L4 6.5Z" fill="#e8a860"/></svg>
<svg width="22" height="22" viewBox="0 0 22 22" style="left:1807.9px;top:421px;"><path d="M4 14L9 9M13 13L18 8" stroke="#ccc" stroke-width="2.5"/><rect x="3" y="10" width="9" height="5" rx="2.5" fill="none" stroke="#bbb" stroke-width="1.5" transform="rotate(-40 7 12)"/><rect x="10" y="7" width="9" height="5" rx="2.5" fill="none" stroke="#bbb" stroke-width="1.5" transform="rotate(-40 14 9)"/></svg>
<svg width="22" height="22" viewBox="0 0 22 22" style="left:1832.9px;top:421px;"><path d="M4 18L13 9" stroke="#6f8fc8" stroke-width="3"/><path d="M12 4Q17 3 18 7L15 10L12 7Z" fill="#6f8fc8"/></svg>
<svg width="22" height="22" viewBox="0 0 22 22" style="left:1858.1px;top:421px;"><path d="M3 4H19L11 18Z" fill="none" stroke="#bbb" stroke-width="1.5"/><circle cx="3" cy="4" r="1.5" fill="#eee"/><circle cx="19" cy="4" r="1.5" fill="#eee"/><circle cx="11" cy="18" r="1.5" fill="#eee"/></svg>
<svg width="22" height="22" viewBox="0 0 22 22" style="left:1882.9px;top:421px;"><circle cx="11" cy="11" r="8" fill="#eee" stroke="#111" stroke-width="1.2"/><path d="M11 11V3A8 8 0 0 1 19 11Z M11 11V19A8 8 0 0 1 3 11Z" fill="#c05a4a"/></svg>
<svg width="22" height="22" viewBox="0 0 22 22" style="left:1907.8px;top:421px;"><rect x="3" y="3" width="16" height="16" fill="#c08060"/><rect x="3" y="3" width="4" height="4" fill="#553"/><rect x="11" y="3" width="4" height="4" fill="#553"/><rect x="7" y="7" width="4" height="4" fill="#553"/></svg>
<svg width="18" height="18" viewBox="0 0 18 18" style="left:1902px;top:416.5px;overflow:hidden"><path d="M2 0L18 16M7 0L18 11M12 0L18 6" stroke="#1a1a1a" stroke-width="1.1"/><path d="M3 0L18 15M8 0L18 10M13 0L18 5" stroke="#a8a8a8" stroke-width="0.7"/></svg>
<svg width="20" height="20" viewBox="0 0 20 20" style="left:1633px;top:460px;"><path d="M2 18L8 12" stroke="#111" stroke-width="1.6"/><path d="M6 7L13 2L18 7L13 14Z" fill="#eee" stroke="#111"/><path d="M5 9L11 15" stroke="#111" stroke-width="2"/></svg>
<svg width="22" height="20" viewBox="0 0 22 20" style="left:1657px;top:460px;"><circle cx="5" cy="4" r="3.5" fill="#dde070" opacity="0.7"/><rect x="11" y="3" width="6" height="12" rx="3" fill="#5a7fc0" stroke="#223"/><circle cx="8" cy="15" r="4" fill="#ddd" stroke="#111"/></svg>
<svg width="6" height="10" viewBox="0 0 6 10" style="left:1686px;top:466px;"><path d="M1 1V9L5 5Z" fill="#333"/></svg>
<svg width="19" height="19" viewBox="0 0 16 16" style="left:1710px;top:462px;opacity:1.0"><path d="M8 1L14.5 4.5V11.5L8 15L1.5 11.5V4.5Z" fill="#c7782e" stroke="#222" stroke-width="1"/><path d="M8 1L14.5 4.5L8 8L1.5 4.5Z" fill="#f4c07a"/><path d="M8 8L14.5 4.5V11.5L8 15Z" fill="#d98a3a"/></svg>
<div class="t" style="left:1735.3px;top:465.1px;font-size:14px;line-height:14px;color:#000;">suspen</div>
<svg width="6" height="10" viewBox="0 0 6 10" style="left:1790px;top:466px;"><path d="M1 1V9L5 5Z" fill="#333"/></svg>
<svg width="20" height="20" viewBox="0 0 20 20" style="left:1811px;top:461px;"><circle cx="10" cy="10" r="8.5" fill="#eee" stroke="#111" stroke-width="1.2"/><path d="M10 10V1.5A8.5 8.5 0 0 1 18.5 10Z M10 10V18.5A8.5 8.5 0 0 1 1.5 10Z" fill="#c06050"/></svg>
<div class="t" style="left:1838.0px;top:465.1px;font-size:14px;line-height:14px;color:#000;">suspen</div>
<div class="b " style="left:1898.8px;top:454.0px;width:16.2px;height:582.0px;background:#616161;border:1px solid #4c4c4c;border-radius:8px"></div>
<div class="b " style="left:1898.8px;top:454.0px;width:16.2px;height:301.0px;background:linear-gradient(90deg,#8a8a8a,#9c9c9c 40%,#8e8e8e);border:1px solid #3a3a3a;border-radius:8px"></div>
<div class="b " style="left:1631.7px;top:503.5px;width:220.9px;height:147.8px;background:#7f7f7f;border:1px solid #3c3c3c;border-radius:5px"></div>
<div class="b " style="left:1638.0px;top:510.0px;width:208.0px;height:22.8px;background:#5680c2;border-radius:3px"></div>
<svg width="21" height="21" viewBox="0 0 21 21" style="left:1639px;top:511px;"><circle cx="10.5" cy="10.5" r="9" fill="#000"/><path d="M10.5 1.5A9 9 0 0 0 3 15Q9 12 13 2Z" fill="#d020d0"/></svg>
<div class="t" style="left:1666.0px;top:516.5px;font-size:14px;line-height:14px;color:#fff;letter-spacing:0.2px">suspension_bridge</div>
<svg width="13" height="13" viewBox="0 0 13 13" style="left:1642px;top:633px;"><circle cx="6.5" cy="6.5" r="5" fill="none" stroke="#555" stroke-width="1.3"/><path d="M6.5 3.5V9.5M3.5 6.5H9.5" stroke="#555" stroke-width="1.3"/></svg>
<div class="b " style="left:1745.0px;top:636.0px;width:17.0px;height:1.0px;background:#e8e8e8;"></div>
<div class="b " style="left:1745.0px;top:640.0px;width:17.0px;height:1.0px;background:#e8e8e8;"></div>
<div class="b " style="left:1863.7px;top:504.0px;width:23.9px;height:73.4px;border:1px solid #1c1c1c;border-radius:5px;overflow:hidden;background:linear-gradient(#a0a0a0,#909090)"></div>
<div class="b " style="left:1864.7px;top:528.0px;width:21.9px;height:1.0px;background:#222;"></div>
<div class="b " style="left:1864.7px;top:552.6px;width:21.9px;height:1.0px;background:#222;"></div>
<div class="b " style="left:1864.7px;top:553.6px;width:21.9px;height:22.8px;background:linear-gradient(#505050,#3c3c3c);border-radius:0 0 4px 4px"></div>
<svg width="15" height="15" style="left:1868px;top:509px"><path d="M7.5 1V14M1 7.5H14" stroke="#111" stroke-width="5"/><path d="M7.5 2V13M2 7.5H13" stroke="#fff" stroke-width="2.6"/></svg>
<svg width="15" height="15" viewBox="0 0 15 15" style="left:1868px;top:533px;"><path d="M2 7.5H13" stroke="#111" stroke-width="4.5"/><path d="M3 7.5H12" stroke="#fff" stroke-width="2"/></svg>
<svg width="14" height="14" viewBox="0 0 14 14" style="left:1869px;top:558px;"><path d="M2 2H12L7 12Z" fill="#111" stroke="#ddd" stroke-width="0.8"/></svg>
<div class="b " style="left:1631.7px;top:658.5px;width:158.6px;height:23.9px;border:1px solid #1c1c1c;border-radius:5px;overflow:hidden;background:linear-gradient(#a3a3a3,#939393)"></div>
<div class="b " style="left:1632.7px;top:659.5px;width:35.8px;height:21.9px;background:linear-gradient(#505050,#3c3c3c);border-radius:4px 0 0 4px"></div>
<svg width="18" height="18" viewBox="0 0 18 18" style="left:1636px;top:661px;"><circle cx="9" cy="9" r="7.5" fill="#eee" stroke="#111" stroke-width="1.2"/><path d="M9 9V1.5A7.5 7.5 0 0 1 16.5 9Z M9 9V16.5A7.5 7.5 0 0 1 1.5 9Z" fill="#c06050"/></svg>
<svg width="8" height="16" style="left:1656px;top:662.5px"><path d="M0.5 6.5L4 1L7.5 6.5Z M0.5 9.5L4 15L7.5 9.5Z" fill="#bdbdbd"/></svg>
<div class="b tfld" style="left:1668.5px;top:659.5px;width:48.5px;height:21.9px;"></div>
<div class="t" style="left:1676.0px;top:664.7px;font-size:14px;line-height:14px;color:#000;">suspe</div>
<div class="b " style="left:1717.0px;top:659.5px;width:1.0px;height:21.9px;background:#222;"></div>
<div class="b " style="left:1741.0px;top:659.5px;width:1.0px;height:21.9px;background:#222;"></div>
<div class="b " style="left:1765.0px;top:659.5px;width:1.0px;height:21.9px;background:#222;"></div>
<div class="t" style="left:1724.0px;top:664.7px;font-size:14px;line-height:14px;color:#000;">F</div>
<svg width="15" height="15" style="left:1745.5px;top:663px"><path d="M7.5 1V14M1 7.5H14" stroke="#111" stroke-width="5"/><path d="M7.5 2V13M2 7.5H13" stroke="#fff" stroke-width="2.6"/></svg>
<svg width="15" height="15" style="left:1770px;top:663px"><path d="M2 2L13 13M13 2L2 13" stroke="#111" stroke-width="5"/><path d="M2.6 2.6L12.4 12.4M12.4 2.6L2.6 12.4" stroke="#fff" stroke-width="2.4"/></svg>
<div class="b menu" style="left:1801.0px;top:658.5px;width:86.6px;height:23.9px;"></div><div class="t" style="left:1810.0px;top:663.8px;font-size:14px;line-height:14px;color:#fff;">Data</div><svg width="8" height="16" style="left:1875.6px;top:662.45px"><path d="M0.5 6.5L4 1L7.5 6.5Z M0.5 9.5L4 15L7.5 9.5Z" fill="#bdbdbd"/></svg>
<div class="b " style="left:1625.0px;top:692.2px;width:270.0px;height:1.0px;background:#606060;"></div><div class="b " style="left:1625.0px;top:693.2px;width:270.0px;height:1.0px;background:#858585;"></div>
<svg width="11" height="12" viewBox="0 0 11 12" style="left:1635px;top:702px;"><path d="M0.5 0.5V11L10 5.75Z" fill="#262626"/></svg><div class="t" style="left:1651.6px;top:701.1px;font-size:14px;line-height:14px;color:#000;letter-spacing:0.35px">Custom Properties</div><svg width="16" height="9" viewBox="0 0 16 9" style="left:1872.8px;top:705.2px;"><rect x="1" y="1" width="2" height="2" fill="#1e1e1e" opacity="0.6"/><rect x="0" y="0" width="2" height="2" fill="#f0f0f0"/><rect x="1" y="5" width="2" height="2" fill="#1e1e1e" opacity="0.6"/><rect x="0" y="4" width="2" height="2" fill="#f0f0f0"/><rect x="5" y="1" width="2" height="2" fill="#1e1e1e" opacity="0.6"/><rect x="4" y="0" width="2" height="2" fill="#f0f0f0"/><rect x="5" y="5" width="2" height="2" fill="#1e1e1e" opacity="0.6"/><rect x="4" y="4" width="2" height="2" fill="#f0f0f0"/><rect x="9" y="1" width="2" height="2" fill="#1e1e1e" opacity="0.6"/><rect x="8" y="0" width="2" height="2" fill="#f0f0f0"/><rect x="9" y="5" width="2" height="2" fill="#1e1e1e" opacity="0.6"/><rect x="8" y="4" width="2" height="2" fill="#f0f0f0"/><rect x="13" y="1" width="2" height="2" fill="#1e1e1e" opacity="0.6"/><rect x="12" y="0" width="2" height="2" fill="#f0f0f0"/><rect x="13" y="5" width="2" height="2" fill="#1e1e1e" opacity="0.6"/><rect x="12" y="4" width="2" height="2" fill="#f0f0f0"/></svg>
<div class="b " style="left:1625.0px;top:721.3px;width:270.0px;height:1.0px;background:#606060;"></div><div class="b " style="left:1625.0px;top:722.3px;width:270.0px;height:1.0px;background:#858585;"></div>
<svg width="10" height="11" viewBox="0 0 10 11" style="left:1635.5px;top:731.0px;"><path d="M0 0.5H9.5L4.75 10.5Z" fill="#262626"/></svg><div class="t" style="left:1651.6px;top:729.6px;font-size:14px;line-height:14px;color:#000;letter-spacing:0.5px">Preview</div><svg width="16" height="9" viewBox="0 0 16 9" style="left:1872.8px;top:733.7px;"><rect x="1" y="1" width="2" height="2" fill="#1e1e1e" opacity="0.6"/><rect x="0" y="0" width="2" height="2" fill="#f0f0f0"/><rect x="1" y="5" width="2" height="2" fill="#1e1e1e" opacity="0.6"/><rect x="0" y="4" width="2" height="2" fill="#f0f0f0"/><rect x="5" y="1" width="2" height="2" fill="#1e1e1e" opacity="0.6"/><rect x="4" y="0" width="2" height="2" fill="#f0f0f0"/><rect x="5" y="5" width="2" height="2" fill="#1e1e1e" opacity="0.6"/><rect x="4" y="4" width="2" height="2" fill="#f0f0f0"/><rect x="9" y="1" width="2" height="2" fill="#1e1e1e" opacity="0.6"/><rect x="8" y="0" width="2" height="2" fill="#f0f0f0"/><rect x="9" y="5" width="2" height="2" fill="#1e1e1e" opacity="0.6"/><rect x="8" y="4" width="2" height="2" fill="#f0f0f0"/><rect x="13" y="1" width="2" height="2" fill="#1e1e1e" opacity="0.6"/><rect x="12" y="0" width="2" height="2" fill="#f0f0f0"/><rect x="13" y="5" width="2" height="2" fill="#1e1e1e" opacity="0.6"/><rect x="12" y="4" width="2" height="2" fill="#f0f0f0"/></svg>
<svg width="210" height="123" viewBox="0 0 210 123" style="left:1631.2px;top:761.2px;"><defs><clipPath id="pc"><rect x="0" y="0" width="209.7" height="122.4" rx="6"/></clipPath><radialGradient id="shad" cx="0.5" cy="0.5" r="0.5"><stop offset="0" stop-color="#000" stop-opacity="0.95"/><stop offset="0.6" stop-color="#000" stop-opacity="0.6"/><stop offset="1" stop-color="#000" stop-opacity="0"/></radialGradient><linearGradient id="bend" x1="0" y1="0" x2="0" y2="1"><stop offset="0" stop-color="#000" stop-opacity="0"/><stop offset="0.7" stop-color="#000" stop-opacity="0.18"/><stop offset="1" stop-color="#000" stop-opacity="0"/></linearGradient></defs><g clip-path="url(#pc)"><rect width="210" height="123" fill="#6f6f6f"/><rect x="2.0" y="1.0" width="17.3" height="17.3" fill="#545454"/><rect x="2.0" y="35.6" width="17.3" height="17.3" fill="#545454"/><rect x="2.0" y="70.2" width="17.3" height="17.3" fill="#545454"/><rect x="19.3" y="18.3" width="17.3" height="17.3" fill="#545454"/><rect x="19.3" y="52.9" width="17.3" height="17.3" fill="#545454"/><rect x="36.6" y="1.0" width="17.3" height="17.3" fill="#545454"/><rect x="36.6" y="35.6" width="17.3" height="17.3" fill="#545454"/><rect x="36.6" y="70.2" width="17.3" height="17.3" fill="#545454"/><rect x="53.9" y="18.3" width="17.3" height="17.3" fill="#545454"/><rect x="53.9" y="52.9" width="17.3" height="17.3" fill="#545454"/><rect x="71.2" y="1.0" width="17.3" height="17.3" fill="#545454"/><rect x="71.2" y="35.6" width="17.3" height="17.3" fill="#545454"/><rect x="71.2" y="70.2" width="17.3" height="17.3" fill="#545454"/><rect x="88.5" y="18.3" width="17.3" height="17.3" fill="#545454"/><rect x="88.5" y="52.9" width="17.3" height="17.3" fill="#545454"/><rect x="105.8" y="1.0" width="17.3" height="17.3" fill="#545454"/><rect x="105.8" y="35.6" width="17.3" height="17.3" fill="#545454"/><rect x="105.8" y="70.2" width="17.3" height="17.3" fill="#545454"/><rect x="123.1" y="18.3" width="17.3" height="17.3" fill="#545454"/><rect x="123.1" y="52.9" width="17.3" height="17.3" fill="#545454"/><rect x="140.4" y="1.0" width="17.3" height="17.3" fill="#545454"/><rect x="140.4" y="35.6" width="17.3" height="17.3" fill="#545454"/><rect x="140.4" y="70.2" width="17.3" height="17.3" fill="#545454"/><rect x="157.7" y="18.3" width="17.3" height="17.3" fill="#545454"/><rect x="157.7" y="52.9" width="17.3" height="17.3" fill="#545454"/><rect x="175.0" y="1.0" width="17.3" height="17.3" fill="#545454"/><rect x="175.0" y="35.6" width="17.3" height="17.3" fill="#545454"/><rect x="175.0" y="70.2" width="17.3" height="17.3" fill="#545454"/><rect x="192.3" y="18.3" width="17.3" height="17.3" fill="#545454"/><rect x="192.3" y="52.9" width="17.3" height="17.3" fill="#545454"/><rect x="209.6" y="1.0" width="17.3" height="17.3" fill="#545454"/><rect x="209.6" y="35.6" width="17.3" height="17.3" fill="#545454"/><rect x="209.6" y="70.2" width="17.3" height="17.3" fill="#545454"/><rect x="0" y="60" width="210" height="30" fill="url(#bend)"/><rect x="0" y="86" width="210" height="37" fill="#6a6a6a"/><polygon points="-97.1,88 -77.0,88 -99.0,95 -121.5,95" fill="#555"/><polygon points="-56.9,88 -36.9,88 -54.0,95 -76.5,95" fill="#555"/><polygon points="-16.8,88 3.3,88 -9.0,95 -31.5,95" fill="#555"/><polygon points="23.3,88 43.4,88 36.0,95 13.5,95" fill="#555"/><polygon points="63.5,88 83.5,88 81.0,95 58.5,95" fill="#555"/><polygon points="103.6,88 123.7,88 125.9,95 103.4,95" fill="#555"/><polygon points="143.7,88 163.8,88 170.9,95 148.4,95" fill="#555"/><polygon points="183.9,88 203.9,88 215.9,95 193.4,95" fill="#555"/><polygon points="224.0,88 244.1,88 260.9,95 238.4,95" fill="#555"/><polygon points="264.2,88 284.2,88 305.9,95 283.4,95" fill="#555"/><polygon points="-99.0,95 -76.5,95 -101.6,104 -127.2,104" fill="#555"/><polygon points="-54.0,95 -31.5,95 -50.4,104 -76.0,104" fill="#555"/><polygon points="-9.0,95 13.5,95 0.8,104 -24.8,104" fill="#555"/><polygon points="36.0,95 58.5,95 52.0,104 26.4,104" fill="#555"/><polygon points="81.0,95 103.4,95 103.2,104 77.6,104" fill="#555"/><polygon points="125.9,95 148.4,95 154.4,104 128.8,104" fill="#555"/><polygon points="170.9,95 193.4,95 205.6,104 180.0,104" fill="#555"/><polygon points="215.9,95 238.4,95 256.8,104 231.2,104" fill="#555"/><polygon points="260.9,95 283.4,95 308.1,104 282.5,104" fill="#555"/><polygon points="305.9,95 328.3,95 359.3,104 333.7,104" fill="#555"/><polygon points="-152.8,104 -127.2,104 -161.7,115 -191.1,115" fill="#555"/><polygon points="-101.6,104 -76.0,104 -102.9,115 -132.3,115" fill="#555"/><polygon points="-50.4,104 -24.8,104 -44.1,115 -73.5,115" fill="#555"/><polygon points="0.8,104 26.4,104 14.7,115 -14.7,115" fill="#555"/><polygon points="52.0,104 77.6,104 73.5,115 44.1,115" fill="#555"/><polygon points="103.2,104 128.8,104 132.4,115 103.0,115" fill="#555"/><polygon points="154.4,104 180.0,104 191.2,115 161.8,115" fill="#555"/><polygon points="205.6,104 231.2,104 250.0,115 220.6,115" fill="#555"/><polygon points="256.8,104 282.5,104 308.8,115 279.4,115" fill="#555"/><polygon points="308.1,104 333.7,104 367.7,115 338.2,115" fill="#555"/><polygon points="-161.7,115 -132.3,115 -154.7,123 -186.8,123" fill="#555"/><polygon points="-102.9,115 -73.5,115 -90.3,123 -122.5,123" fill="#555"/><polygon points="-44.1,115 -14.7,115 -25.9,123 -58.1,123" fill="#555"/><polygon points="14.7,115 44.1,115 38.4,123 6.2,123" fill="#555"/><polygon points="73.5,115 103.0,115 102.8,123 70.6,123" fill="#555"/><polygon points="132.4,115 161.8,115 167.1,123 134.9,123" fill="#555"/><polygon points="191.2,115 220.6,115 231.5,123 199.3,123" fill="#555"/><polygon points="250.0,115 279.4,115 295.8,123 263.7,123" fill="#555"/><polygon points="308.8,115 338.2,115 360.2,123 328.0,123" fill="#555"/><polygon points="367.7,115 397.1,115 424.5,123 392.4,123" fill="#555"/><ellipse cx="150" cy="104" rx="75" ry="24" fill="url(#shad)"/><circle cx="105" cy="58.6" r="56.3" fill="#000"/><path d="M118 3.5A56.3 56.3 0 0 0 72 104Q68 80 90 50Q112 25 124 6Z" fill="#8c0e98"/><path d="M100 4A56.3 56.3 0 0 0 52 45Q70 25 100 22Q110 12 120 5Z" fill="#a818b8" opacity="0.8"/><path d="M75 14Q82 8 92 6" stroke="#e040f0" stroke-width="3" fill="none" opacity="0.8"/></g><rect x="0.5" y="0.5" width="209" height="121.4" rx="6" fill="none" stroke="#3a3a3a"/></svg>
<div class="b " style="left:1727.0px;top:888.0px;width:18.0px;height:1.0px;background:#e8e8e8;"></div>
<div class="b " style="left:1727.0px;top:891.5px;width:18.0px;height:1.0px;background:#e8e8e8;"></div>
<div class="b " style="left:1851.5px;top:761.7px;width:36.0px;height:149.0px;border:1px solid #1c1c1c;border-radius:5px;overflow:hidden;background:linear-gradient(#505050,#3c3c3c)"></div>
<div class="b " style="left:1852.5px;top:786.0px;width:34.0px;height:1.0px;background:#222;"></div>
<div class="b " style="left:1852.5px;top:810.5px;width:34.0px;height:1.0px;background:#222;"></div>
<div class="b " style="left:1852.5px;top:835.0px;width:34.0px;height:1.0px;background:#222;"></div>
<div class="b " style="left:1852.5px;top:859.7px;width:34.0px;height:1.0px;background:#222;"></div>
<div class="b " style="left:1852.5px;top:884.6px;width:34.0px;height:1.0px;background:#222;"></div>
<div class="b " style="left:1852.5px;top:786.5px;width:34.0px;height:23.5px;background:#5680c2;"></div>
<svg width="22" height="22" viewBox="0 0 22 22" style="left:1858px;top:763.2px;"><rect x="4" y="3" width="14" height="14" fill="#aaa" stroke="#ddd" stroke-width="0.8"/></svg>
<svg width="22" height="22" viewBox="0 0 22 22" style="left:1858px;top:787.5px;"><circle cx="11" cy="10" r="7.5" fill="#eee" stroke="#111" stroke-width="1.5"/><circle cx="9" cy="8" r="3" fill="#fff"/></svg>
<svg width="22" height="22" viewBox="0 0 22 22" style="left:1858px;top:812.0px;"><path d="M11 2L18 5.5V14L11 18L4 14V5.5Z" fill="#aaa" stroke="#ccc" stroke-width="0.8"/></svg>
<svg width="22" height="22" viewBox="0 0 22 22" style="left:1858px;top:836.5px;"><circle cx="11" cy="8" r="5" fill="#bbb"/><rect x="3" y="6" width="4" height="4" fill="#bbb"/><rect x="15" y="6" width="4" height="4" fill="#bbb"/><path d="M9 12V18H13V12" fill="#bbb"/></svg>
<svg width="22" height="22" viewBox="0 0 22 22" style="left:1858px;top:861.2px;"><path d="M6 18Q6 8 12 4M10 18Q10 11 15 7M14 18Q14 13 18 11" fill="none" stroke="#bbb" stroke-width="1.5"/></svg>
<svg width="22" height="22" viewBox="0 0 22 22" style="left:1858px;top:886.1px;"><circle cx="6" cy="6" r="3" fill="#dde070" opacity="0.5"/><circle cx="14" cy="8" r="4" fill="#6a7fa0"/><circle cx="9" cy="14" r="5" fill="#bbb" stroke="#222"/></svg>
<div class="b " style="left:1625.0px;top:920.5px;width:270.0px;height:1.0px;background:#606060;"></div><div class="b " style="left:1625.0px;top:921.5px;width:270.0px;height:1.0px;background:#858585;"></div>
<svg width="10" height="11" viewBox="0 0 10 11" style="left:1635.5px;top:931.8px;"><path d="M0 0.5H9.5L4.75 10.5Z" fill="#262626"/></svg><div class="t" style="left:1651.3px;top:930.4px;font-size:14px;line-height:14px;color:#000;letter-spacing:0.5px">Surface</div><svg width="16" height="9" viewBox="0 0 16 9" style="left:1872.8px;top:934.5px;"><rect x="1" y="1" width="2" height="2" fill="#1e1e1e" opacity="0.6"/><rect x="0" y="0" width="2" height="2" fill="#f0f0f0"/><rect x="1" y="5" width="2" height="2" fill="#1e1e1e" opacity="0.6"/><rect x="0" y="4" width="2" height="2" fill="#f0f0f0"/><rect x="5" y="1" width="2" height="2" fill="#1e1e1e" opacity="0.6"/><rect x="4" y="0" width="2" height="2" fill="#f0f0f0"/><rect x="5" y="5" width="2" height="2" fill="#1e1e1e" opacity="0.6"/><rect x="4" y="4" width="2" height="2" fill="#f0f0f0"/><rect x="9" y="1" width="2" height="2" fill="#1e1e1e" opacity="0.6"/><rect x="8" y="0" width="2" height="2" fill="#f0f0f0"/><rect x="9" y="5" width="2" height="2" fill="#1e1e1e" opacity="0.6"/><rect x="8" y="4" width="2" height="2" fill="#f0f0f0"/><rect x="13" y="1" width="2" height="2" fill="#1e1e1e" opacity="0.6"/><rect x="12" y="0" width="2" height="2" fill="#f0f0f0"/><rect x="13" y="5" width="2" height="2" fill="#1e1e1e" opacity="0.6"/><rect x="12" y="4" width="2" height="2" fill="#f0f0f0"/></svg>
<div class="t" style="left:1640.0px;top:967.1px;font-size:14px;line-height:14px;color:#000;letter-spacing:0.3px">Surface:</div>
<div class="b menu" style="left:1727.6px;top:960.2px;width:159.9px;height:24.1px;"></div><div class="t" style="left:1736.6px;top:965.6px;font-size:14px;line-height:14px;color:#fff;">PBR.000</div>
<svg width="8" height="8" viewBox="0 0 8 8" style="left:1870px;top:967px;"><circle cx="4" cy="4" r="2.8" fill="none" stroke="#aaa" stroke-width="1.2"/></svg>
<svg width="13" height="13" viewBox="0 0 13 13" style="left:1630px;top:1009px;"><circle cx="6.5" cy="6.5" r="5.3" fill="#eee" stroke="#111" stroke-width="1.4"/><path d="M3.5 6.5H9.5M6.5 3.5V9.5" stroke="#111" stroke-width="1.8"/></svg>
<div class="t" style="left:1652.0px;top:1010.7px;font-size:14px;line-height:14px;color:#000;letter-spacing:0.3px">is Metallic</div>
<div class="b menu" style="left:1727.6px;top:1004.4px;width:159.9px;height:23.8px;"></div><div class="t" style="left:1736.6px;top:1009.6px;font-size:14px;line-height:14px;color:#fff;">Separate RGB</div>
<svg width="8" height="8" viewBox="0 0 8 8" style="left:1870px;top:1011px;"><circle cx="4" cy="4" r="2.8" fill="none" stroke="#aaa" stroke-width="1.2"/></svg>
<div class="b " style="left:1727.6px;top:1035.0px;width:159.9px;height:15.0px;background:#5a6a88;border:1px solid #1a1a1a;border-radius:5px"></div>
<svg width="16" height="16" viewBox="0 0 16 16" style="left:1621px;top:1025px;"><path d="M0 4L12 16M0 9L7 16M0 13L3 16" stroke="#1a1a1a" stroke-width="1.2"/><path d="M0 5L11 16M0 10L6 16" stroke="#a0a0a0" stroke-width="0.8"/></svg>
<div class="b " style="left:0.0px;top:1008.0px;width:1620.0px;height:33.0px;background:#6b6b6b;"></div>
<div class="b " style="left:0.0px;top:1008.0px;width:1620.0px;height:1.0px;background:#7c7c7c;"></div>
<div class="b " style="left:0.0px;top:1039.0px;width:1620.0px;height:1.0px;background:#4a4a4a;"></div>
<div class="b " style="left:0.0px;top:1040.0px;width:1920.0px;height:1.0px;background:#d8d8d8;"></div>
<svg width="14" height="14" viewBox="0 0 14 14" style="left:0px;top:1026px;"><path d="M0 2L12 14M0 7L7 14M0 11L3 14" stroke="#1a1a1a" stroke-width="1.2"/><path d="M0 3L11 14M0 8L6 14" stroke="#a0a0a0" stroke-width="0.8"/></svg>
<div class="b menu" style="left:11.7px;top:1012.7px;width:38.3px;height:24.0px;"></div>
<svg width="18" height="19" viewBox="0 0 18 19" style="left:17px;top:1015px;"><path d="M9 1L17 5V14L9 18L1 14V5Z" fill="#ccc" stroke="#111" stroke-width="1.2"/><path d="M9 1L17 5L9 9L1 5Z" fill="#f0f0f0"/><path d="M9 9L17 5V14L9 18Z" fill="#999"/></svg>
<svg width="8" height="16" style="left:38px;top:1017px"><path d="M0.5 6.5L4 1L7.5 6.5Z M0.5 9.5L4 15L7.5 9.5Z" fill="#bdbdbd"/></svg>
<div class="t" style="left:66.0px;top:1018.8px;font-size:14px;line-height:14px;color:#000;">View</div>
<div class="t" style="left:122.3px;top:1018.8px;font-size:14px;line-height:14px;color:#000;">Select</div>
<div class="t" style="left:186.0px;top:1018.8px;font-size:14px;line-height:14px;color:#000;">Add</div>
<div class="t" style="left:236.0px;top:1018.8px;font-size:14px;line-height:14px;color:#000;">Object</div>
<div class="b menu" style="left:294.3px;top:1012.7px;width:143.0px;height:24.0px;"></div><div class="t" style="left:324.0px;top:1018.0px;font-size:14px;line-height:14px;color:#fff;">Object Mode</div><svg width="8" height="16" style="left:425.3px;top:1016.7px"><path d="M0.5 6.5L4 1L7.5 6.5Z M0.5 9.5L4 15L7.5 9.5Z" fill="#bdbdbd"/></svg>
<svg width="18" height="18" viewBox="0 0 16 16" style="left:301px;top:1016px;opacity:1.0"><path d="M8 1L14.5 4.5V11.5L8 15L1.5 11.5V4.5Z" fill="#c7782e" stroke="#222" stroke-width="1"/><path d="M8 1L14.5 4.5L8 8L1.5 4.5Z" fill="#f4c07a"/><path d="M8 8L14.5 4.5V11.5L8 15Z" fill="#d98a3a"/></svg>
<div class="b menu" style="left:445.0px;top:1012.7px;width:38.0px;height:24.0px;"></div><svg width="8" height="16" style="left:471px;top:1016.7px"><path d="M0.5 6.5L4 1L7.5 6.5Z M0.5 9.5L4 15L7.5 9.5Z" fill="#bdbdbd"/></svg>
<svg width="17" height="17" viewBox="0 0 17 17" style="left:451px;top:1016px;"><circle cx="8.5" cy="8.5" r="7.5" fill="#f4f4f4" stroke="#111"/><circle cx="6.5" cy="6" r="3" fill="#fff"/></svg>
<div class="b " style="left:490.7px;top:1012.7px;width:63.6px;height:24.0px;border:1px solid #1a1a1a;border-radius:5px;overflow:hidden;background:linear-gradient(#505050,#3c3c3c)"></div>
<div class="b " style="left:530.0px;top:1013.7px;width:23.3px;height:22.0px;background:linear-gradient(#a3a3a3,#939393);border-radius:0 4px 4px 0"></div>
<svg width="20" height="20" viewBox="0 0 20 20" style="left:495px;top:1015px;"><circle cx="7" cy="7" r="5.5" fill="#ddd" stroke="#111"/><circle cx="12" cy="12" r="5.5" fill="#eee" stroke="#111"/><rect x="9" y="9" width="6" height="6" fill="#4a78c8"/></svg>
<svg width="8" height="16" style="left:518px;top:1017px"><path d="M0.5 6.5L4 1L7.5 6.5Z M0.5 9.5L4 15L7.5 9.5Z" fill="#bdbdbd"/></svg>
<svg width="20" height="20" viewBox="0 0 20 20" style="left:532px;top:1015px;"><circle cx="4" cy="4" r="2.2" fill="none" stroke="#fff" stroke-width="1.3"/><circle cx="10" cy="4" r="2.2" fill="none" stroke="#fff" stroke-width="1.3"/><circle cx="16" cy="4" r="2.2" fill="none" stroke="#fff" stroke-width="1.3"/><path d="M3 13H17M3 13L6 10M3 13L6 16M17 13L14 10M17 13L14 16" stroke="#111" stroke-width="3"/><path d="M3 13H17M3 13L6 10M3 13L6 16M17 13L14 10M17 13L14 16" stroke="#fff" stroke-width="1.3"/></svg>
<div class="b " style="left:562.0px;top:1012.7px;width:188.3px;height:24.0px;border:1px solid #1a1a1a;border-radius:5px;overflow:hidden;background:linear-gradient(#505050,#3c3c3c)"></div>
<div class="b " style="left:585.7px;top:1013.7px;width:1.0px;height:22.0px;background:#222;"></div>
<div class="b " style="left:610.0px;top:1013.7px;width:1.0px;height:22.0px;background:#222;"></div>
<div class="b " style="left:636.0px;top:1013.7px;width:1.0px;height:22.0px;background:#222;"></div>
<div class="b " style="left:660.6px;top:1013.7px;width:1.0px;height:22.0px;background:#222;"></div>
<div class="b " style="left:586.7px;top:1013.7px;width:23.3px;height:22.0px;background:#5680c2;"></div>
<svg width="20" height="21" viewBox="0 0 20 21" style="left:565px;top:1014px;"><path d="M10 11V2" stroke="#2848d8" stroke-width="2.2"/><path d="M10 11L2 17" stroke="#d83030" stroke-width="2.2"/><path d="M10 11L18 17" stroke="#30b030" stroke-width="2.2"/></svg>
<svg width="20" height="21" viewBox="0 0 20 21" style="left:589px;top:1014px;"><path d="M3 18L15 6" stroke="#111" stroke-width="3.5"/><path d="M3 18L15 6" stroke="#9ec0f0" stroke-width="1.6"/><path d="M9 4H17V12Z" fill="#9ec0f0" stroke="#111"/></svg>
<svg width="20" height="21" viewBox="0 0 20 21" style="left:613px;top:1014px;"><path d="M4 18Q5 6 17 4" fill="none" stroke="#111" stroke-width="3.6"/><path d="M4 18Q5 6 17 4" fill="none" stroke="#6f8fc8" stroke-width="2"/></svg>
<svg width="20" height="21" viewBox="0 0 20 21" style="left:638px;top:1014px;"><path d="M4 18L12 8" stroke="#6f8fc8" stroke-width="2.5"/><path d="M8 5H17V11H14V8H10Z" fill="#6f8fc8"/></svg>
<div class="t" style="left:670.0px;top:1018.8px;font-size:14px;line-height:14px;color:#fff;">Global</div>
<svg width="8" height="16" style="left:738px;top:1017px"><path d="M0.5 6.5L4 1L7.5 6.5Z M0.5 9.5L4 15L7.5 9.5Z" fill="#bdbdbd"/></svg>
<div class="b " style="left:757.0px;top:1012.7px;width:59.8px;height:24.0px;border:1px solid #1c1c1c;border-radius:5px;overflow:hidden;background:linear-gradient(#a0a0a0,#909090)"></div><div class="b " style="left:769.0px;top:1013.7px;width:1.0px;height:22.0px;background:#333;"></div><div class="b " style="left:780.9px;top:1013.7px;width:1.0px;height:22.0px;background:#333;"></div><div class="b " style="left:792.9px;top:1013.7px;width:1.0px;height:22.0px;background:#333;"></div><div class="b " style="left:804.8px;top:1013.7px;width:1.0px;height:22.0px;background:#333;"></div><div class="b " style="left:758.0px;top:1024.2px;width:57.8px;height:1.0px;background:#333;"></div><svg width="8" height="8" viewBox="0 0 8 8" style="left:760px;top:1015px;"><circle cx="4" cy="4" r="2.6" fill="#ee8a20" stroke="#222" stroke-width="0.8"/></svg>
<div class="b " style="left:822.5px;top:1012.7px;width:59.9px;height:24.0px;border:1px solid #1c1c1c;border-radius:5px;overflow:hidden;background:linear-gradient(#a0a0a0,#909090)"></div><div class="b " style="left:834.5px;top:1013.7px;width:1.0px;height:22.0px;background:#333;"></div><div class="b " style="left:846.5px;top:1013.7px;width:1.0px;height:22.0px;background:#333;"></div><div class="b " style="left:858.4px;top:1013.7px;width:1.0px;height:22.0px;background:#333;"></div><div class="b " style="left:870.4px;top:1013.7px;width:1.0px;height:22.0px;background:#333;"></div><div class="b " style="left:823.5px;top:1024.2px;width:57.9px;height:1.0px;background:#333;"></div>
<div class="b " style="left:889.0px;top:1012.7px;width:24.5px;height:24.0px;border:1px solid #1c1c1c;border-radius:5px;background:linear-gradient(#a0a0a0,#909090)"></div>
<svg width="20" height="20" viewBox="0 0 20 20" style="left:892px;top:1015px;"><rect x="2" y="3" width="12" height="12" fill="#ccc" stroke="#222"/><rect x="3" y="4" width="6" height="6" fill="#eee"/><ellipse cx="14" cy="9" rx="3" ry="4" fill="none" stroke="#111" stroke-width="2.4"/><ellipse cx="14" cy="15" rx="3" ry="4" fill="none" stroke="#111" stroke-width="2.4"/><ellipse cx="14" cy="9" rx="3" ry="4" fill="none" stroke="#eee" stroke-width="1"/><ellipse cx="14" cy="15" rx="3" ry="4" fill="none" stroke="#eee" stroke-width="1"/></svg>
<div class="b " style="left:919.6px;top:1012.7px;width:24.4px;height:24.0px;border:1px solid #1c1c1c;border-radius:5px;background:linear-gradient(#a0a0a0,#909090)"></div>
<svg width="20" height="20" viewBox="0 0 20 20" style="left:922px;top:1015px;"><circle cx="10" cy="10" r="7" fill="none" stroke="#888" stroke-width="1.6"/><circle cx="10" cy="10" r="3.5" fill="none" stroke="#888" stroke-width="1.4"/></svg>
<div class="b " style="left:950.6px;top:1012.7px;width:89.7px;height:24.0px;border:1px solid #1c1c1c;border-radius:5px;overflow:hidden;background:linear-gradient(#505050,#3c3c3c)"></div>
<div class="b " style="left:951.6px;top:1013.7px;width:24.4px;height:22.0px;background:linear-gradient(#a0a0a0,#909090);border-radius:4px 0 0 4px"></div>
<div class="b " style="left:1015.0px;top:1013.7px;width:24.3px;height:22.0px;background:linear-gradient(#a0a0a0,#909090);border-radius:0 4px 4px 0"></div>
<svg width="22" height="22" viewBox="0 0 22 22" style="left:953px;top:1014px;"><path d="M6 17L13 9Q15.5 6.5 13 4Q10.5 1.5 8 4L3 9" fill="none" stroke="#6a6a6a" stroke-width="5"/><path d="M6 17L13 9Q15.5 6.5 13 4Q10.5 1.5 8 4L3 9" fill="none" stroke="#b8b8b8" stroke-width="3"/><path d="M4 15L8 19M1 8L5 12" stroke="#8a8a8a" stroke-width="2.5"/></svg>
<svg width="22" height="20" viewBox="0 0 22 20" style="left:979px;top:1015px;"><path d="M2 10H20M3 5V15M19 5V15M8 7V13M14 7V13" stroke="#d8d8d8" stroke-width="1.3"/><rect x="9" y="3" width="4" height="14" fill="#6aa0ff" opacity="0.5"/><path d="M11 3V17" stroke="#fff" stroke-width="1.6"/></svg>
<svg width="8" height="16" style="left:1003px;top:1017px"><path d="M0.5 6.5L4 1L7.5 6.5Z M0.5 9.5L4 15L7.5 9.5Z" fill="#bdbdbd"/></svg>
<svg width="22" height="21" viewBox="0 0 22 21" style="left:1017px;top:1015px;"><path d="M3 10H19M3 15H19M7 4V20M13 4V20" stroke="#222" stroke-width="1.2"/><circle cx="10" cy="7" r="5" fill="#6a9ee8" stroke="#eee" stroke-width="1.5"/></svg>
<div class="b " style="left:1047.0px;top:1012.7px;width:49.0px;height:24.0px;border:1px solid #1c1c1c;border-radius:5px;overflow:hidden;background:linear-gradient(#a0a0a0,#909090)"></div>
<div class="b " style="left:1071.0px;top:1013.7px;width:1.0px;height:22.0px;background:#222;"></div>
<svg width="20" height="21" viewBox="0 0 20 21" style="left:1050px;top:1014px;"><rect x="2" y="6" width="15" height="12" fill="#ddd" stroke="#111"/><circle cx="9.5" cy="12" r="4" fill="#333" stroke="#eee"/><path d="M15 1L17 5L20 3" stroke="#f0e060" stroke-width="1.5"/></svg>
<svg width="20" height="21" viewBox="0 0 20 21" style="left:1075px;top:1014px;"><rect x="2" y="9" width="16" height="10" fill="#ddd" stroke="#111"/><path d="M2 5L17 2L18 6L3 9Z" fill="#333" stroke="#111"/><path d="M5 5L8 8M10 4L13 7" stroke="#eee"/><rect x="4" y="12" width="12" height="4" fill="#777"/></svg>
</body></html>
